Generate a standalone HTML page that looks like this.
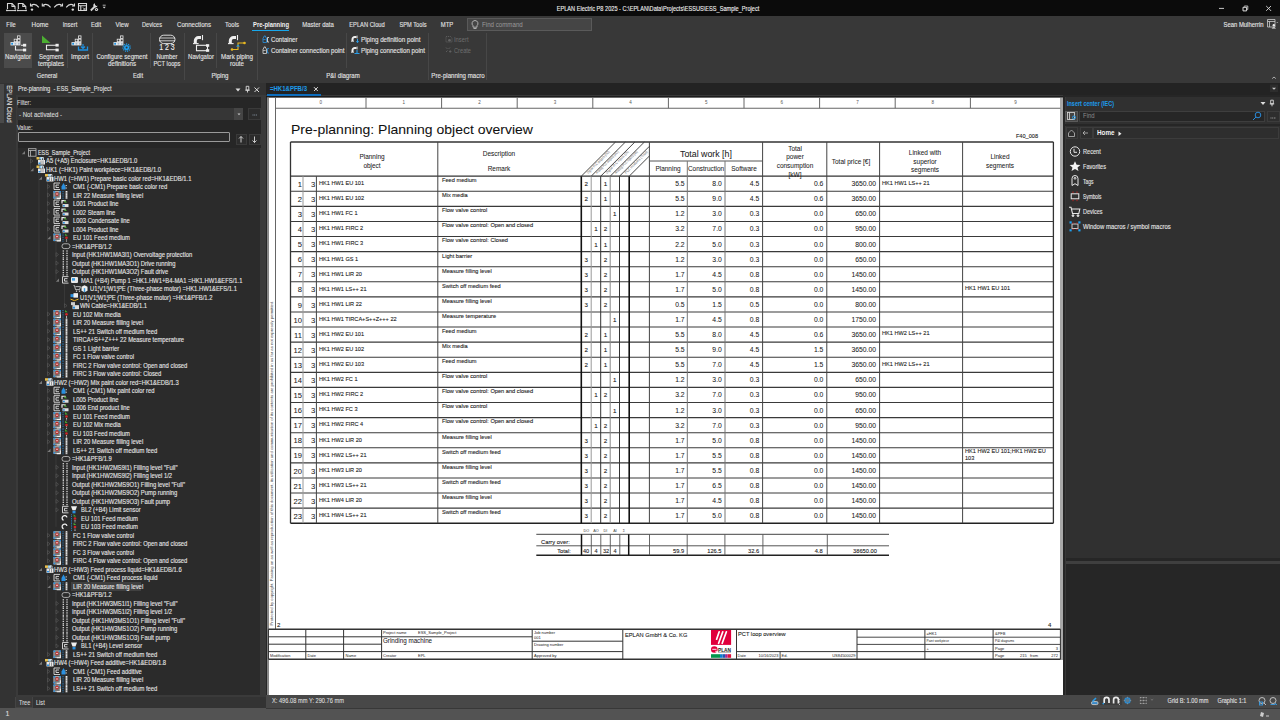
<!DOCTYPE html><html><head><meta charset="utf-8"><style>
html,body{margin:0;padding:0;width:1280px;height:720px;overflow:hidden;background:#262626;}
.t{position:absolute;white-space:pre;line-height:1;font-family:"Liberation Sans", sans-serif;}
.r{position:absolute;}
svg{position:absolute;overflow:visible;}
</style></head><body>
<div class="r" style="left:0.00px;top:0.00px;width:1280.00px;height:16.00px;background:#0b0b0b;"></div>
<div class="t" style="left:358.00px;width:600px;text-align:center;top:4.58px;font-size:7px;color:#f0f0f0;-webkit-text-stroke:0.12px #f0f0f0;transform:scaleX(0.800742416734528);transform-origin:50% 0;">EPLAN Electric P8 2025 - C:\EPLAN\Data\Projects\ESSUS\ESS_Sample_Project</div>
<svg style="left:0;top:0" width="110" height="16" viewBox="0 0 110 16" fill="none" stroke="#d8d8d8" stroke-width="1.1"><path d="M7.5 9V3.5h4.5l3 3V9"/><path d="M12.0 3.5v3h3"/><path d="M6.7 10.6h8.5" stroke-width="1"/><circle cx="6.9" cy="10.3" r="0.9" fill="#d8d8d8" stroke="none"/><circle cx="15.3" cy="10.3" r="0.9" fill="#d8d8d8" stroke="none"/><path d="M18.3 9V3.5h4.5l3 3V9"/><path d="M22.8 3.5v3h3"/><path d="M17.5 10.6h8.5" stroke-width="1"/><circle cx="17.7" cy="10.3" r="0.9" fill="#d8d8d8" stroke="none"/><circle cx="26.1" cy="10.3" r="0.9" fill="#d8d8d8" stroke="none"/><path d="M31 5.5q4-3 7.8 1.8"/><path d="M30.5 3.5v2.5h2.5"/><circle cx="32" cy="9.6" r="1.2" fill="#d8d8d8" stroke="none"/><path d="M42.8 5.5q4-3 7.8 1.8"/><path d="M42.3 3.5v2.5h2.5"/><path d="M62 5.5q-4-3-7.8 1.8"/><path d="M62.5 3.5v2.5h-2.5"/><path d="M74 5.5q-4-3-7.8 1.8"/><path d="M74.5 3.5v2.5h-2.5"/><circle cx="72.8" cy="9.6" r="1.2" fill="#d8d8d8" stroke="none"/><path d="M78.5 3.5h8v7h-8zM78.5 5.8h8M80.8 5.8v4.7"/><path d="M83 7.5l3 3M86 7.5l-3 3" stroke-width="0.9"/><path d="M90.8 10.5l4.5-4.5" stroke-width="1.8"/><path d="M95 3.2a2.2 2.2 0 1 0 2.6 2.6l-1.4 0.2-1.2-1.2z" fill="#d8d8d8" stroke="none"/><circle cx="96.5" cy="9.5" r="1.6" fill="#d8d8d8" stroke="none"/><circle cx="96.5" cy="9.5" r="0.6" fill="#0b0b0b" stroke="none"/><path d="M102.7 5.2h3" stroke-width="0.8"/><path d="M102.7 6.8h3l-1.5 1.6z" fill="#d8d8d8" stroke="none"/></svg>
<svg style="left:1210;top:0" width="70" height="16" fill="none" stroke="#ddd" stroke-width="0.9"><path d="M9 8.4h5"/><path d="M33 7.3h3.6v3.6h-3.6z" stroke-width="1"/><path d="M34.3 6.6v-0.6h3.5v3.5h-0.6" stroke-width="0.8"/><path d="M56.2 6l4.8 4.8M61 6l-4.8 4.8"/></svg>
<div class="r" style="left:0.00px;top:16.00px;width:1280.00px;height:67.00px;background:#383838;"></div>
<div class="t" style="left:-288.62px;width:600px;text-align:center;top:20.98px;font-size:7px;color:#e2e2e2;-webkit-text-stroke:0.12px #e2e2e2;transform:scaleX(0.820078627808977);transform-origin:50% 0;">File</div>
<div class="t" style="left:-259.62px;width:600px;text-align:center;top:20.98px;font-size:7px;color:#e2e2e2;-webkit-text-stroke:0.12px #e2e2e2;transform:scaleX(0.8970411032266703);transform-origin:50% 0;">Home</div>
<div class="t" style="left:-230.25px;width:600px;text-align:center;top:20.98px;font-size:7px;color:#e2e2e2;-webkit-text-stroke:0.12px #e2e2e2;transform:scaleX(0.8282453069818047);transform-origin:50% 0;">Insert</div>
<div class="t" style="left:-204.00px;width:600px;text-align:center;top:20.98px;font-size:7px;color:#e2e2e2;-webkit-text-stroke:0.12px #e2e2e2;transform:scaleX(0.8290434651944237);transform-origin:50% 0;">Edit</div>
<div class="t" style="left:-178.50px;width:600px;text-align:center;top:20.98px;font-size:7px;color:#e2e2e2;-webkit-text-stroke:0.12px #e2e2e2;transform:scaleX(0.86401342543938);transform-origin:50% 0;">View</div>
<div class="t" style="left:-148.00px;width:600px;text-align:center;top:20.98px;font-size:7px;color:#e2e2e2;-webkit-text-stroke:0.12px #e2e2e2;transform:scaleX(0.8033227436986234);transform-origin:50% 0;">Devices</div>
<div class="t" style="left:-106.00px;width:600px;text-align:center;top:20.98px;font-size:7px;color:#e2e2e2;-webkit-text-stroke:0.12px #e2e2e2;transform:scaleX(0.8737268021719499);transform-origin:50% 0;">Connections</div>
<div class="t" style="left:-68.00px;width:600px;text-align:center;top:20.98px;font-size:7px;color:#e2e2e2;-webkit-text-stroke:0.12px #e2e2e2;transform:scaleX(0.8567202339917138);transform-origin:50% 0;">Tools</div>
<div class="t" style="left:-29.50px;width:600px;text-align:center;top:20.98px;font-size:7px;color:#f0f0f0;font-weight:bold;transform:scaleX(0.841524254635597);transform-origin:50% 0;">Pre-planning</div>
<div class="t" style="left:18.25px;width:600px;text-align:center;top:20.98px;font-size:7px;color:#e2e2e2;-webkit-text-stroke:0.12px #e2e2e2;transform:scaleX(0.8522248098029525);transform-origin:50% 0;">Master data</div>
<div class="t" style="left:66.50px;width:600px;text-align:center;top:20.98px;font-size:7px;color:#e2e2e2;-webkit-text-stroke:0.12px #e2e2e2;transform:scaleX(0.8219536884086442);transform-origin:50% 0;">EPLAN Cloud</div>
<div class="t" style="left:112.50px;width:600px;text-align:center;top:20.98px;font-size:7px;color:#e2e2e2;-webkit-text-stroke:0.12px #e2e2e2;transform:scaleX(0.8101087317813438);transform-origin:50% 0;">SPM Tools</div>
<div class="t" style="left:146.75px;width:600px;text-align:center;top:20.98px;font-size:7px;color:#e2e2e2;-webkit-text-stroke:0.12px #e2e2e2;transform:scaleX(0.845965537478917);transform-origin:50% 0;">MTP</div>
<style>.tw{}</style>
<div class="r" style="left:252.00px;top:29.60px;width:37.00px;height:1.60px;background:#18a8ec;"></div>
<div class="r" style="left:466.75px;top:18.00px;width:125.00px;height:13.00px;background:#454545;box-sizing:border-box;border:1px solid #5a5a5a;"></div>
<svg style="left:470;top:19" width="10" height="11" fill="none" stroke="#bbb" stroke-width="0.9"><path d="M5 1.5a3 3 0 0 1 2 5.2v1.5h-4v-1.5a3 3 0 0 1 2-5.2zM3.5 9.5h3"/></svg>
<div class="t" style="left:482.00px;top:20.68px;font-size:7px;color:#9a9a9a;transform:scaleX(0.880192562372848);transform-origin:0 0;">Find command</div>
<div class="t" style="right:16.75px;top:20.58px;font-size:7px;color:#e6e6e6;-webkit-text-stroke:0.12px #e6e6e6;transform:scaleX(0.8426518781262055);transform-origin:100% 0;">Sean Mulherrin</div>
<svg style="left:1266;top:18" width="14" height="13" fill="none" stroke="#ccc" stroke-width="0.8"><path d="M1.5 1.5h7.5v7.5h-7.5zM1.5 3.5h7.5M3.5 3.5v5.5"/><circle cx="7.8" cy="7.3" r="1.2" fill="#eee" stroke="none"/><path d="M5.6 10.5q2.2-2.6 4.4 0z" fill="#eee" stroke="none"/><path d="M10.5 4l0.8 0.8 0.8-0.8" stroke-width="0.6"/></svg>
<svg style="left:1270;top:74" width="8" height="6" fill="none" stroke="#bbb" stroke-width="0.9"><path d="M2.2 4.6l1.8-1.6 1.8 1.6"/></svg>
<div class="r" style="left:4.00px;top:33.40px;width:28.00px;height:35.00px;background:#4b4b4b;"></div>
<div class="t" style="left:-282.00px;width:600px;text-align:center;top:52.83px;font-size:7px;color:#e4e4e4;-webkit-text-stroke:0.12px #e4e4e4;transform:scaleX(0.867861784665967);transform-origin:50% 0;">Navigator</div>
<div class="t" style="left:-249.50px;width:600px;text-align:center;top:52.83px;font-size:7px;color:#e4e4e4;-webkit-text-stroke:0.12px #e4e4e4;transform:scaleX(0.8566141655875334);transform-origin:50% 0;">Segment</div>
<div class="t" style="left:-249.50px;width:600px;text-align:center;top:60.18px;font-size:7px;color:#e4e4e4;-webkit-text-stroke:0.12px #e4e4e4;transform:scaleX(0.8567206750794165);transform-origin:50% 0;">templates</div>
<div class="t" style="left:-220.40px;width:600px;text-align:center;top:52.83px;font-size:7px;color:#e4e4e4;-webkit-text-stroke:0.12px #e4e4e4;transform:scaleX(0.9073495312027422);transform-origin:50% 0;">Import</div>
<div class="t" style="left:-178.00px;width:600px;text-align:center;top:52.83px;font-size:7px;color:#e4e4e4;-webkit-text-stroke:0.12px #e4e4e4;transform:scaleX(0.8622896484822354);transform-origin:50% 0;">Configure segment</div>
<div class="t" style="left:-178.00px;width:600px;text-align:center;top:60.18px;font-size:7px;color:#e4e4e4;-webkit-text-stroke:0.12px #e4e4e4;transform:scaleX(0.8883059381169995);transform-origin:50% 0;">definitions</div>
<div class="t" style="left:-133.00px;width:600px;text-align:center;top:52.83px;font-size:7px;color:#e4e4e4;-webkit-text-stroke:0.12px #e4e4e4;transform:scaleX(0.8434851753087287);transform-origin:50% 0;">Number</div>
<div class="t" style="left:-133.00px;width:600px;text-align:center;top:60.18px;font-size:7px;color:#e4e4e4;-webkit-text-stroke:0.12px #e4e4e4;transform:scaleX(0.8294178379553698);transform-origin:50% 0;">PCT loops</div>
<div class="t" style="left:-99.00px;width:600px;text-align:center;top:52.83px;font-size:7px;color:#e4e4e4;-webkit-text-stroke:0.12px #e4e4e4;transform:scaleX(0.867861784665967);transform-origin:50% 0;">Navigator</div>
<div class="t" style="left:-63.50px;width:600px;text-align:center;top:52.83px;font-size:7px;color:#e4e4e4;-webkit-text-stroke:0.12px #e4e4e4;transform:scaleX(0.8843958967139597);transform-origin:50% 0;">Mark piping</div>
<div class="t" style="left:-63.50px;width:600px;text-align:center;top:60.18px;font-size:7px;color:#e4e4e4;-webkit-text-stroke:0.12px #e4e4e4;transform:scaleX(0.8774575667004852);transform-origin:50% 0;">route</div>
<div class="t" style="left:-253.25px;width:600px;text-align:center;top:72.08px;font-size:7px;color:#e4e4e4;-webkit-text-stroke:0.12px #e4e4e4;transform:scaleX(0.8231779814948085);transform-origin:50% 0;">General</div>
<div class="t" style="left:-162.00px;width:600px;text-align:center;top:72.08px;font-size:7px;color:#e4e4e4;-webkit-text-stroke:0.12px #e4e4e4;transform:scaleX(0.8290434651944237);transform-origin:50% 0;">Edit</div>
<div class="t" style="left:-80.00px;width:600px;text-align:center;top:72.08px;font-size:7px;color:#e4e4e4;-webkit-text-stroke:0.12px #e4e4e4;transform:scaleX(0.8736457687600975);transform-origin:50% 0;">Piping</div>
<div class="t" style="left:43.00px;width:600px;text-align:center;top:72.08px;font-size:7px;color:#e4e4e4;-webkit-text-stroke:0.12px #e4e4e4;transform:scaleX(0.8697370059709231);transform-origin:50% 0;">P&amp;I diagram</div>
<div class="t" style="left:158.40px;width:600px;text-align:center;top:72.08px;font-size:7px;color:#e4e4e4;-webkit-text-stroke:0.12px #e4e4e4;transform:scaleX(0.8725334342831053);transform-origin:50% 0;">Pre-planning macro</div>
<div class="r" style="left:66.60px;top:33.00px;width:0.80px;height:35.00px;background:#474747;"></div>
<div class="r" style="left:92.10px;top:33.00px;width:0.80px;height:47.00px;background:#474747;"></div>
<div class="r" style="left:150.20px;top:33.00px;width:0.80px;height:35.00px;background:#474747;"></div>
<div class="r" style="left:183.60px;top:33.00px;width:0.80px;height:47.00px;background:#474747;"></div>
<div class="r" style="left:216.10px;top:33.00px;width:0.80px;height:35.00px;background:#474747;"></div>
<div class="r" style="left:256.60px;top:33.00px;width:0.80px;height:47.00px;background:#474747;"></div>
<div class="r" style="left:346.10px;top:33.00px;width:0.80px;height:35.00px;background:#474747;"></div>
<div class="r" style="left:427.60px;top:33.00px;width:0.80px;height:47.00px;background:#474747;"></div>
<div class="r" style="left:485.60px;top:33.00px;width:0.80px;height:47.00px;background:#474747;"></div>
<div class="t" style="left:270.50px;top:35.68px;font-size:7px;color:#e4e4e4;-webkit-text-stroke:0.12px #e4e4e4;transform:scaleX(0.8730953805223539);transform-origin:0 0;">Container</div>
<div class="t" style="left:270.50px;top:46.58px;font-size:7px;color:#e4e4e4;-webkit-text-stroke:0.12px #e4e4e4;transform:scaleX(0.8825731209203977);transform-origin:0 0;">Container connection point</div>
<div class="t" style="left:360.50px;top:35.68px;font-size:7px;color:#e4e4e4;-webkit-text-stroke:0.12px #e4e4e4;transform:scaleX(0.894088333955141);transform-origin:0 0;">Piping definition point</div>
<div class="t" style="left:360.50px;top:46.58px;font-size:7px;color:#e4e4e4;-webkit-text-stroke:0.12px #e4e4e4;transform:scaleX(0.8841473417730261);transform-origin:0 0;">Piping connection point</div>
<div class="t" style="left:454.00px;top:35.68px;font-size:7px;color:#6e6e6e;transform:scaleX(0.8282453069818047);transform-origin:0 0;">Insert</div>
<div class="t" style="left:454.00px;top:46.58px;font-size:7px;color:#6e6e6e;transform:scaleX(0.8091234619775186);transform-origin:0 0;">Create</div>
<svg style="left:0;top:0" width="500" height="83" viewBox="0 0 500 83"><rect x="17.1" y="35.5" width="3.3" height="3.3" fill="#f0f0f0"/><rect x="17.85" y="36.25" width="1.8" height="1.8" fill="#3a3a3a"/><rect x="13.8" y="38.8" width="3.3" height="3.3" fill="#f0f0f0"/><rect x="14.55" y="39.55" width="1.8" height="1.8" fill="#3a3a3a"/><rect x="17.1" y="38.8" width="3.3" height="3.3" fill="#f0f0f0"/><rect x="17.85" y="39.55" width="1.8" height="1.8" fill="#3a3a3a"/><rect x="10.5" y="42.1" width="9.9" height="3.3" fill="#f0f0f0"/><rect x="11.2" y="42.8" width="1.9" height="1.9" fill="#1e90e0"/><rect x="14.5" y="42.8" width="1.9" height="1.9" fill="#a8b8c8"/><rect x="17.8" y="42.8" width="1.9" height="1.9" fill="#a8b8c8"/><path d="M15.5 46v4h8M21 45.2h3" stroke="#eee" stroke-width="1.1" fill="none"/><rect x="23" y="43.8" width="3.2" height="2.8" fill="#eee"/><rect x="23" y="48.6" width="3.2" height="2.8" fill="#eee"/><path d="M42 35.5l8.5 7.5h-8.5z" fill="#4caf32"/><path d="M56 45.2h-9.5v4.6h9.5" fill="none" stroke="#eee" stroke-width="1.1"/><rect x="55.5" y="43.8" width="3.2" height="2.8" fill="#eee"/><rect x="55.5" y="48.6" width="3.2" height="2.8" fill="#eee"/><rect x="78.1" y="35.5" width="3.3" height="3.3" fill="#f0f0f0"/><rect x="78.85" y="36.25" width="1.8" height="1.8" fill="#3a3a3a"/><rect x="74.8" y="38.8" width="3.3" height="3.3" fill="#f0f0f0"/><rect x="75.55" y="39.55" width="1.8" height="1.8" fill="#3a3a3a"/><rect x="78.1" y="38.8" width="3.3" height="3.3" fill="#f0f0f0"/><rect x="78.85" y="39.55" width="1.8" height="1.8" fill="#3a3a3a"/><rect x="71.5" y="42.1" width="9.9" height="3.3" fill="#f0f0f0"/><rect x="72.2" y="42.8" width="1.9" height="1.9" fill="#1e90e0"/><rect x="75.5" y="42.8" width="1.9" height="1.9" fill="#a8b8c8"/><rect x="78.8" y="42.8" width="1.9" height="1.9" fill="#a8b8c8"/><path d="M78.5 46.5v3.5h9v-3.5" stroke="#1e90e0" stroke-width="1.3" fill="none"/><path d="M83 44v4M81 46.5l2 2 2-2" stroke="#1e90e0" stroke-width="1.2" fill="none"/><rect x="120.1" y="35.5" width="3.3" height="3.3" fill="#f0f0f0"/><rect x="120.85" y="36.25" width="1.8" height="1.8" fill="#3a3a3a"/><rect x="116.8" y="38.8" width="3.3" height="3.3" fill="#f0f0f0"/><rect x="117.55" y="39.55" width="1.8" height="1.8" fill="#3a3a3a"/><rect x="120.1" y="38.8" width="3.3" height="3.3" fill="#f0f0f0"/><rect x="120.85" y="39.55" width="1.8" height="1.8" fill="#3a3a3a"/><rect x="113.5" y="42.1" width="9.9" height="3.3" fill="#f0f0f0"/><rect x="114.2" y="42.8" width="1.9" height="1.9" fill="#1e90e0"/><rect x="117.5" y="42.8" width="1.9" height="1.9" fill="#a8b8c8"/><rect x="120.8" y="42.8" width="1.9" height="1.9" fill="#a8b8c8"/><circle cx="126.6" cy="47.6" r="2.6" fill="#1ea0f0"/><circle cx="126.6" cy="47.6" r="3.6" fill="none" stroke="#1ea0f0" stroke-width="1.3" stroke-dasharray="1.1 0.9"/><circle cx="126.6" cy="47.6" r="1" fill="#383838"/><rect x="159.5" y="35.2" width="15.5" height="8.4" rx="4.2" fill="none" stroke="#eee" stroke-width="0.9"/><path d="M159.5 38h15.5M159.5 40.8h15.5" stroke="#eee" stroke-width="0.8"/></svg>
<div class="t" style="left:-132.70px;width:600px;text-align:center;top:43.61px;font-size:8.2px;color:#f4f4f4;-webkit-text-stroke:0.12px #f4f4f4;transform:scaleX(0.849882044596875);transform-origin:50% 0;">1 2 3</div>
<svg style="left:0;top:0" width="500" height="83"><path d="M201 37.5h-2.5a3.2 3.2 0 0 0 -3.2 3.2v2.3" stroke="#eee" stroke-width="3" fill="none"/><path d="M202.5 35v5.2" stroke="#eee" stroke-width="1.1"/><path d="M193 43.6h5.6" stroke="#eee" stroke-width="1.1"/><rect x="196.5" y="45.3" width="11" height="5.4" fill="none" stroke="#eee" stroke-width="1.1"/><rect x="206" y="44.2" width="3.2" height="2.6" fill="#eee"/><rect x="206" y="49.2" width="3.2" height="2.6" fill="#eee"/><path d="M236 37.5h-2.5a3.2 3.2 0 0 0 -3.2 3.2v2.3" stroke="#eee" stroke-width="3" fill="none"/><path d="M237.5 35v5.2" stroke="#eee" stroke-width="1.1"/><path d="M228 43.6h5.6" stroke="#eee" stroke-width="1.1"/><path d="M232 49.5h6v-6.5h6" stroke="#e8b820" stroke-width="1.1" fill="none"/><circle cx="232" cy="49.5" r="1.3" fill="#e8b820"/><circle cx="244.5" cy="43" r="1.3" fill="#e8b820"/><path d="M236 46.5l2-2 2 2z" fill="#1e9be8"/><path d="M264.0 36.0h1.5v1l1 1v4.5h-3.5v-4.5l1-1z" stroke="#2a8ad0" stroke-width="0.9" fill="none"/><path d="M263.1 39.5h2.5" stroke="#2a8ad0" stroke-width="0.8"/><path d="M269.0 37.5h-1.5v4.5h1.5" stroke="#ddd" stroke-width="0.9" fill="none"/><path d="M264.0 47.0h1.5v1l1 1v4.5h-3.5v-4.5l1-1z" stroke="#c8c8c8" stroke-width="0.9" fill="none"/><path d="M263.1 50.5h2.5" stroke="#c8c8c8" stroke-width="0.8"/><path d="M269.0 48.5h-1.5v4.5h1.5" stroke="#2a8ad0" stroke-width="0.9" fill="none"/><path d="M356.5 37.0h-1.8a2.2 2.2 0 0 0 -2.2 2.2v1.8" stroke="#eee" stroke-width="2" fill="none"/><path d="M357.1 35.5v3" stroke="#eee" stroke-width="0.8"/><path d="M351.0 41.3h3" stroke="#eee" stroke-width="0.8"/><path d="M357.5 39.0v3.5M356.3 41.3l1.2 1.4 1.2-1.4" stroke="#2a9de8" stroke-width="1" fill="none"/><path d="M356.5 48.0h-1.8a2.2 2.2 0 0 0 -2.2 2.2v1.8" stroke="#eee" stroke-width="2" fill="none"/><path d="M357.1 46.5v3" stroke="#eee" stroke-width="0.8"/><path d="M351.0 52.3h3" stroke="#eee" stroke-width="0.8"/><path d="M357.0 50.0v3M354.5 53.5h5" stroke="#2a9de8" stroke-width="1.1" fill="none"/><path d="M446 36.5h4.5l1.5 1.5v4h-6z" stroke="#666" stroke-width="0.8" fill="none" stroke-dasharray="1.2 0.8"/><circle cx="449.5" cy="40.2" r="1.3" fill="#666"/><path d="M446 47.5l1.5 1.5M450 47.5l-1.5 1.5M446 52l1.5-1.5M449 51.5h2.5M450.2 50.2v2.6" stroke="#666" stroke-width="0.8"/></svg>
<div class="r" style="left:0.00px;top:83.00px;width:1280.00px;height:12.00px;background:#232323;"></div>
<svg style="left:1269;top:84" width="11" height="10"><rect x="1" y="0.5" width="8" height="7.5" fill="#2d2d2d"/><path d="M3 3.8h4l-2 2z" fill="#ccc"/></svg>
<div class="r" style="left:266.00px;top:94.60px;width:1014.00px;height:1.30px;background:#313131;"></div>
<div class="r" style="left:0.00px;top:695.00px;width:1280.00px;height:13.00px;background:#3d3d3d;"></div>
<div class="r" style="left:0.00px;top:708.00px;width:1280.00px;height:12.00px;background:#535353;"></div>
<div class="t" style="left:5.50px;top:710.08px;font-size:7px;color:#ddd;-webkit-text-stroke:0.12px #ddd;">1</div>
<svg style="left:1258;top:710" width="16" height="9"><path d="M3 2l3 1-1 4-3-1z" fill="#ccc"/><path d="M8 6h3" stroke="#ccc"/></svg>
<div class="r" style="left:0.00px;top:83.00px;width:266.00px;height:625.00px;background:#333333;"></div>
<div class="r" style="left:0.00px;top:84.00px;width:3.50px;height:38.50px;background:#4a4a4a;"></div>
<div class="t" style="left:8.8px;top:104px;font-size:6.6px;color:#e0e0e0;-webkit-text-stroke:0.12px #e0e0e0;transform:translate(-50%,-50%) rotate(90deg) scaleX(0.921);transform-origin:50% 50%;">EPLAN Cloud</div>
<div class="t" style="left:17.50px;top:85.38px;font-size:7px;color:#e0e0e0;-webkit-text-stroke:0.12px #e0e0e0;transform:scaleX(0.8118232065035939);transform-origin:0 0;">Pre-planning  - ESS_Sample_Project</div>
<svg style="left:232;top:85" width="32" height="10" fill="#ddd" stroke="#ddd"><path d="M3.5 3.5h5l-2.5 3z" stroke="none"/><path d="M14.2 1.3h2.6v3.8h-2.6z" stroke-width="0.9" fill="none"/><path d="M13.3 5.2h4.4" stroke-width="1"/><path d="M15.5 5.2v2.3" stroke-width="0.9"/><path d="M22.5 2.5l4.5 4.5M27 2.5l-4.5 4.5" stroke-width="1" fill="none"/></svg>
<div class="r" style="left:15.50px;top:95.00px;width:251.50px;height:602.00px;background:#3a3a3a;"></div>
<div class="r" style="left:17.50px;top:97.00px;width:243.00px;height:50.50px;background:#262626;"></div>
<div class="t" style="left:17.20px;top:98.68px;font-size:7px;color:#d8d8d8;-webkit-text-stroke:0.12px #d8d8d8;transform:scaleX(0.8);transform-origin:0 0;">Filter:</div>
<div class="r" style="left:17.30px;top:108.20px;width:217.00px;height:12.20px;background:#363636;"></div>
<div class="t" style="left:19.30px;top:111.08px;font-size:7px;color:#d8d8d8;-webkit-text-stroke:0.12px #d8d8d8;transform:scaleX(0.8703242210724722);transform-origin:0 0;">- Not activated -</div>
<div class="r" style="left:234.40px;top:108.20px;width:8.70px;height:12.20px;background:#454545;"></div>
<svg style="left:235;top:110" width="8" height="8"><path d="M2.5 3.5h3l-1.5 1.8z" fill="#ccc"/></svg>
<div class="r" style="left:248.00px;top:108.20px;width:13.00px;height:12.20px;background:#2c2c2c;box-sizing:border-box;border:1px solid #3a3a3a;"></div>
<svg style="left:251;top:113" width="8" height="4"><path d="M1.5 2h5" stroke="#9ab" stroke-width="0.8" stroke-dasharray="1 0.7"/></svg>
<div class="t" style="left:17.20px;top:123.58px;font-size:7px;color:#d8d8d8;-webkit-text-stroke:0.12px #d8d8d8;transform:scaleX(0.8);transform-origin:0 0;">Value:</div>
<div class="r" style="left:17.80px;top:132.20px;width:212.00px;height:9.80px;background:#2b2b2b;box-sizing:border-box;border:1.3px solid #9a9a9a;border-radius:1px;"></div>
<div class="r" style="left:235.50px;top:133.50px;width:11.50px;height:11.80px;background:#2c2c2c;box-sizing:border-box;border:1px solid #3a3a3a;"></div>
<div class="r" style="left:248.50px;top:133.50px;width:12.00px;height:11.80px;background:#2c2c2c;box-sizing:border-box;border:1px solid #3a3a3a;"></div>
<svg style="left:235;top:133" width="28" height="13" fill="none" stroke="#ddd" stroke-width="0.9"><path d="M6 3.5v6M4 5.5l2-2 2 2"/><path d="M19.5 3.5v6M17.5 7.5l2 2 2-2"/></svg>
<div class="r" style="left:18.00px;top:147.50px;width:242.00px;height:547.50px;background:#2b2b2b;"></div>
<div class="r" style="left:70.70px;top:582.00px;width:70.30px;height:9.00px;background:#404040;"></div>
<div class="t" style="left:37.50px;top:148.98px;font-size:7px;color:#e6e6e6;-webkit-text-stroke:0.12px #e6e6e6;transform:scaleX(0.773);transform-origin:0 0;">ESS_Sample_Project</div>
<div class="t" style="left:45.50px;top:157.49px;font-size:7px;color:#e6e6e6;-webkit-text-stroke:0.12px #e6e6e6;transform:scaleX(0.835);transform-origin:0 0;">A5 (+A5) Enclosure=HK1&amp;EDB/1.0</div>
<div class="t" style="left:45.50px;top:166.00px;font-size:7px;color:#e6e6e6;-webkit-text-stroke:0.12px #e6e6e6;transform:scaleX(0.835);transform-origin:0 0;">HK1 (=HK1) Paint workpiece=HK1&amp;EDB/1.0</div>
<div class="t" style="left:54.00px;top:174.50px;font-size:7px;color:#e6e6e6;-webkit-text-stroke:0.12px #e6e6e6;transform:scaleX(0.835);transform-origin:0 0;">HW1 (=HW1) Prepare basic color red=HK1&amp;EDB/1.1</div>
<div class="t" style="left:73.00px;top:183.01px;font-size:7px;color:#e6e6e6;-webkit-text-stroke:0.12px #e6e6e6;transform:scaleX(0.835);transform-origin:0 0;">CM1 (-CM1) Prepare basic color red</div>
<div class="t" style="left:73.00px;top:191.52px;font-size:7px;color:#e6e6e6;-webkit-text-stroke:0.12px #e6e6e6;transform:scaleX(0.835);transform-origin:0 0;">LIR 22 Measure filling level</div>
<div class="t" style="left:73.00px;top:200.03px;font-size:7px;color:#e6e6e6;-webkit-text-stroke:0.12px #e6e6e6;transform:scaleX(0.835);transform-origin:0 0;">L001 Product line</div>
<div class="t" style="left:73.00px;top:208.54px;font-size:7px;color:#e6e6e6;-webkit-text-stroke:0.12px #e6e6e6;transform:scaleX(0.835);transform-origin:0 0;">L002 Steam line</div>
<div class="t" style="left:73.00px;top:217.04px;font-size:7px;color:#e6e6e6;-webkit-text-stroke:0.12px #e6e6e6;transform:scaleX(0.835);transform-origin:0 0;">L003 Condensate line</div>
<div class="t" style="left:73.00px;top:225.55px;font-size:7px;color:#e6e6e6;-webkit-text-stroke:0.12px #e6e6e6;transform:scaleX(0.835);transform-origin:0 0;">L004 Product line</div>
<div class="t" style="left:73.00px;top:234.06px;font-size:7px;color:#e6e6e6;-webkit-text-stroke:0.12px #e6e6e6;transform:scaleX(0.835);transform-origin:0 0;">EU 101 Feed medium</div>
<div class="t" style="left:71.50px;top:242.57px;font-size:7px;color:#e6e6e6;-webkit-text-stroke:0.12px #e6e6e6;transform:scaleX(0.835);transform-origin:0 0;">=HK1&amp;PFB/1.2</div>
<div class="t" style="left:71.50px;top:251.08px;font-size:7px;color:#e6e6e6;-webkit-text-stroke:0.12px #e6e6e6;transform:scaleX(0.835);transform-origin:0 0;">Input (HK1HW1MA3I1) Overvoltage protection</div>
<div class="t" style="left:71.50px;top:259.58px;font-size:7px;color:#e6e6e6;-webkit-text-stroke:0.12px #e6e6e6;transform:scaleX(0.835);transform-origin:0 0;">Output (HK1HW1MA3O1) Drive running</div>
<div class="t" style="left:71.50px;top:268.09px;font-size:7px;color:#e6e6e6;-webkit-text-stroke:0.12px #e6e6e6;transform:scaleX(0.835);transform-origin:0 0;">Output (HK1HW1MA3O2) Fault drive</div>
<div class="t" style="left:81.00px;top:276.60px;font-size:7px;color:#e6e6e6;-webkit-text-stroke:0.12px #e6e6e6;transform:scaleX(0.835);transform-origin:0 0;">MA1 (+B4) Pump 1 =HK1.HW1+B4-MA1 =HK1.HW1&amp;EFS/1.1</div>
<div class="t" style="left:90.00px;top:285.11px;font-size:7px;color:#e6e6e6;-webkit-text-stroke:0.12px #e6e6e6;transform:scaleX(0.835);transform-origin:0 0;">U1¦V1¦W1¦PE (Three-phase motor) =HK1.HW1&amp;EFS/1.1</div>
<div class="t" style="left:80.00px;top:293.62px;font-size:7px;color:#e6e6e6;-webkit-text-stroke:0.12px #e6e6e6;transform:scaleX(0.835);transform-origin:0 0;">U1¦V1¦W1¦PE (Three-phase motor) =HK1&amp;PFB/1.2</div>
<div class="t" style="left:80.00px;top:302.12px;font-size:7px;color:#e6e6e6;-webkit-text-stroke:0.12px #e6e6e6;transform:scaleX(0.835);transform-origin:0 0;">WN Cable=HK1&amp;EDB/1.1</div>
<div class="t" style="left:73.00px;top:310.63px;font-size:7px;color:#e6e6e6;-webkit-text-stroke:0.12px #e6e6e6;transform:scaleX(0.835);transform-origin:0 0;">EU 102 Mix media</div>
<div class="t" style="left:73.00px;top:319.14px;font-size:7px;color:#e6e6e6;-webkit-text-stroke:0.12px #e6e6e6;transform:scaleX(0.835);transform-origin:0 0;">LIR 20 Measure filling level</div>
<div class="t" style="left:73.00px;top:327.65px;font-size:7px;color:#e6e6e6;-webkit-text-stroke:0.12px #e6e6e6;transform:scaleX(0.835);transform-origin:0 0;">LS++ 21 Switch off medium feed</div>
<div class="t" style="left:73.00px;top:336.16px;font-size:7px;color:#e6e6e6;-webkit-text-stroke:0.12px #e6e6e6;transform:scaleX(0.835);transform-origin:0 0;">TIRCA+S++Z+++ 22 Measure temperature</div>
<div class="t" style="left:73.00px;top:344.66px;font-size:7px;color:#e6e6e6;-webkit-text-stroke:0.12px #e6e6e6;transform:scaleX(0.835);transform-origin:0 0;">GS 1 Light barrier</div>
<div class="t" style="left:73.00px;top:353.17px;font-size:7px;color:#e6e6e6;-webkit-text-stroke:0.12px #e6e6e6;transform:scaleX(0.835);transform-origin:0 0;">FC 1 Flow valve control</div>
<div class="t" style="left:73.00px;top:361.68px;font-size:7px;color:#e6e6e6;-webkit-text-stroke:0.12px #e6e6e6;transform:scaleX(0.835);transform-origin:0 0;">FIRC 2 Flow valve control: Open and closed</div>
<div class="t" style="left:73.00px;top:370.19px;font-size:7px;color:#e6e6e6;-webkit-text-stroke:0.12px #e6e6e6;transform:scaleX(0.835);transform-origin:0 0;">FIRC 3 Flow valve control: Closed</div>
<div class="t" style="left:54.00px;top:378.70px;font-size:7px;color:#e6e6e6;-webkit-text-stroke:0.12px #e6e6e6;transform:scaleX(0.835);transform-origin:0 0;">HW2 (=HW2) Mix paint color red=HK1&amp;EDB/1.3</div>
<div class="t" style="left:73.00px;top:387.20px;font-size:7px;color:#e6e6e6;-webkit-text-stroke:0.12px #e6e6e6;transform:scaleX(0.835);transform-origin:0 0;">CM1 (-CM1) Mix paint color red</div>
<div class="t" style="left:73.00px;top:395.71px;font-size:7px;color:#e6e6e6;-webkit-text-stroke:0.12px #e6e6e6;transform:scaleX(0.835);transform-origin:0 0;">L005 Product line</div>
<div class="t" style="left:73.00px;top:404.22px;font-size:7px;color:#e6e6e6;-webkit-text-stroke:0.12px #e6e6e6;transform:scaleX(0.835);transform-origin:0 0;">L006 End product line</div>
<div class="t" style="left:73.00px;top:412.73px;font-size:7px;color:#e6e6e6;-webkit-text-stroke:0.12px #e6e6e6;transform:scaleX(0.835);transform-origin:0 0;">EU 101 Feed medium</div>
<div class="t" style="left:73.00px;top:421.24px;font-size:7px;color:#e6e6e6;-webkit-text-stroke:0.12px #e6e6e6;transform:scaleX(0.835);transform-origin:0 0;">EU 102 Mix media</div>
<div class="t" style="left:73.00px;top:429.74px;font-size:7px;color:#e6e6e6;-webkit-text-stroke:0.12px #e6e6e6;transform:scaleX(0.835);transform-origin:0 0;">EU 103 Feed medium</div>
<div class="t" style="left:73.00px;top:438.25px;font-size:7px;color:#e6e6e6;-webkit-text-stroke:0.12px #e6e6e6;transform:scaleX(0.835);transform-origin:0 0;">LIR 20 Measure filling level</div>
<div class="t" style="left:73.00px;top:446.76px;font-size:7px;color:#e6e6e6;-webkit-text-stroke:0.12px #e6e6e6;transform:scaleX(0.835);transform-origin:0 0;">LS++ 21 Switch off medium feed</div>
<div class="t" style="left:71.50px;top:455.27px;font-size:7px;color:#e6e6e6;-webkit-text-stroke:0.12px #e6e6e6;transform:scaleX(0.835);transform-origin:0 0;">=HK1&amp;PFB/1.9</div>
<div class="t" style="left:71.50px;top:463.78px;font-size:7px;color:#e6e6e6;-webkit-text-stroke:0.12px #e6e6e6;transform:scaleX(0.835);transform-origin:0 0;">Input (HK1HW2MS9I1) Filling level &quot;Full&quot;</div>
<div class="t" style="left:71.50px;top:472.28px;font-size:7px;color:#e6e6e6;-webkit-text-stroke:0.12px #e6e6e6;transform:scaleX(0.835);transform-origin:0 0;">Input (HK1HW2MS9I2) Filling level 1/2</div>
<div class="t" style="left:71.50px;top:480.79px;font-size:7px;color:#e6e6e6;-webkit-text-stroke:0.12px #e6e6e6;transform:scaleX(0.835);transform-origin:0 0;">Output (HK1HW2MS9O1) Filling level &quot;Full&quot;</div>
<div class="t" style="left:71.50px;top:489.30px;font-size:7px;color:#e6e6e6;-webkit-text-stroke:0.12px #e6e6e6;transform:scaleX(0.835);transform-origin:0 0;">Output (HK1HW2MS9O2) Pump running</div>
<div class="t" style="left:71.50px;top:497.81px;font-size:7px;color:#e6e6e6;-webkit-text-stroke:0.12px #e6e6e6;transform:scaleX(0.835);transform-origin:0 0;">Output (HK1HW2MS9O3) Fault pump</div>
<div class="t" style="left:81.00px;top:506.32px;font-size:7px;color:#e6e6e6;-webkit-text-stroke:0.12px #e6e6e6;transform:scaleX(0.835);transform-origin:0 0;">BL2 (+B4) Limit sensor</div>
<div class="t" style="left:80.50px;top:514.82px;font-size:7px;color:#e6e6e6;-webkit-text-stroke:0.12px #e6e6e6;transform:scaleX(0.835);transform-origin:0 0;">EU 101 Feed medium</div>
<div class="t" style="left:80.50px;top:523.33px;font-size:7px;color:#e6e6e6;-webkit-text-stroke:0.12px #e6e6e6;transform:scaleX(0.835);transform-origin:0 0;">EU 103 Feed medium</div>
<div class="t" style="left:73.00px;top:531.84px;font-size:7px;color:#e6e6e6;-webkit-text-stroke:0.12px #e6e6e6;transform:scaleX(0.835);transform-origin:0 0;">FC 1 Flow valve control</div>
<div class="t" style="left:73.00px;top:540.35px;font-size:7px;color:#e6e6e6;-webkit-text-stroke:0.12px #e6e6e6;transform:scaleX(0.835);transform-origin:0 0;">FIRC 2 Flow valve control: Open and closed</div>
<div class="t" style="left:73.00px;top:548.86px;font-size:7px;color:#e6e6e6;-webkit-text-stroke:0.12px #e6e6e6;transform:scaleX(0.835);transform-origin:0 0;">FC 3 Flow valve control</div>
<div class="t" style="left:73.00px;top:557.36px;font-size:7px;color:#e6e6e6;-webkit-text-stroke:0.12px #e6e6e6;transform:scaleX(0.835);transform-origin:0 0;">FIRC 4 Flow valve control: Open and closed</div>
<div class="t" style="left:54.00px;top:565.87px;font-size:7px;color:#e6e6e6;-webkit-text-stroke:0.12px #e6e6e6;transform:scaleX(0.835);transform-origin:0 0;">HW3 (=HW3) Feed process liquid=HK1&amp;EDB/1.6</div>
<div class="t" style="left:73.00px;top:574.38px;font-size:7px;color:#e6e6e6;-webkit-text-stroke:0.12px #e6e6e6;transform:scaleX(0.835);transform-origin:0 0;">CM1 (-CM1) Feed process liquid</div>
<div class="t" style="left:73.00px;top:582.89px;font-size:7px;color:#e6e6e6;-webkit-text-stroke:0.12px #e6e6e6;transform:scaleX(0.835);transform-origin:0 0;">LIR 20 Measure filling level</div>
<div class="t" style="left:71.50px;top:591.40px;font-size:7px;color:#e6e6e6;-webkit-text-stroke:0.12px #e6e6e6;transform:scaleX(0.835);transform-origin:0 0;">=HK1&amp;PFB/1.2</div>
<div class="t" style="left:71.50px;top:599.90px;font-size:7px;color:#e6e6e6;-webkit-text-stroke:0.12px #e6e6e6;transform:scaleX(0.835);transform-origin:0 0;">Input (HK1HW3MS1I1) Filling level &quot;Full&quot;</div>
<div class="t" style="left:71.50px;top:608.41px;font-size:7px;color:#e6e6e6;-webkit-text-stroke:0.12px #e6e6e6;transform:scaleX(0.835);transform-origin:0 0;">Input (HK1HW3MS1I2) Filling level 1/2</div>
<div class="t" style="left:71.50px;top:616.92px;font-size:7px;color:#e6e6e6;-webkit-text-stroke:0.12px #e6e6e6;transform:scaleX(0.835);transform-origin:0 0;">Output (HK1HW3MS1O1) Filling level &quot;Full&quot;</div>
<div class="t" style="left:71.50px;top:625.43px;font-size:7px;color:#e6e6e6;-webkit-text-stroke:0.12px #e6e6e6;transform:scaleX(0.835);transform-origin:0 0;">Output (HK1HW3MS1O2) Pump running</div>
<div class="t" style="left:71.50px;top:633.94px;font-size:7px;color:#e6e6e6;-webkit-text-stroke:0.12px #e6e6e6;transform:scaleX(0.835);transform-origin:0 0;">Output (HK1HW3MS1O3) Fault pump</div>
<div class="t" style="left:81.00px;top:642.44px;font-size:7px;color:#e6e6e6;-webkit-text-stroke:0.12px #e6e6e6;transform:scaleX(0.835);transform-origin:0 0;">BL1 (+B4) Level sensor</div>
<div class="t" style="left:73.00px;top:650.95px;font-size:7px;color:#e6e6e6;-webkit-text-stroke:0.12px #e6e6e6;transform:scaleX(0.835);transform-origin:0 0;">LS++ 21 Switch off medium feed</div>
<div class="t" style="left:54.00px;top:659.46px;font-size:7px;color:#e6e6e6;-webkit-text-stroke:0.12px #e6e6e6;transform:scaleX(0.835);transform-origin:0 0;">HW4 (=HW4) Feed additive=HK1&amp;EDB/1.8</div>
<div class="t" style="left:73.00px;top:667.97px;font-size:7px;color:#e6e6e6;-webkit-text-stroke:0.12px #e6e6e6;transform:scaleX(0.835);transform-origin:0 0;">CM1 (-CM1) Feed additive</div>
<div class="t" style="left:73.00px;top:676.48px;font-size:7px;color:#e6e6e6;-webkit-text-stroke:0.12px #e6e6e6;transform:scaleX(0.835);transform-origin:0 0;">LIR 20 Measure filling level</div>
<div class="t" style="left:73.00px;top:684.98px;font-size:7px;color:#e6e6e6;-webkit-text-stroke:0.12px #e6e6e6;transform:scaleX(0.835);transform-origin:0 0;">LS++ 21 Switch off medium feed</div>
<svg style="left:0;top:0" width="266" height="720">
<path d="M30.5 156.5V169.5" stroke="#3c3c3c" stroke-width="0.8"/>
<path d="M39.0 173.5V663.0" stroke="#3c3c3c" stroke-width="0.8"/>
<path d="M47.5 182.0V373.7" stroke="#3c3c3c" stroke-width="0.8"/>
<path d="M56.0 241.6V280.1" stroke="#3c3c3c" stroke-width="0.8"/>
<path d="M64.5 284.1V305.6" stroke="#3c3c3c" stroke-width="0.8"/>
<path d="M47.5 386.2V560.9" stroke="#3c3c3c" stroke-width="0.8"/>
<path d="M56.0 454.3V526.9" stroke="#3c3c3c" stroke-width="0.8"/>
<path d="M47.5 573.4V654.5" stroke="#3c3c3c" stroke-width="0.8"/>
<path d="M56.0 590.4V646.0" stroke="#3c3c3c" stroke-width="0.8"/>
<path d="M47.5 667.0V688.5" stroke="#3c3c3c" stroke-width="0.8"/>
<path d="M25.0 151.0v3.2h-3.2z" fill="#7a7a7a"/>
<rect x="28.5" y="148.7" width="7.5" height="7.5" fill="none" stroke="#bbb" stroke-width="0.8"/><path d="M28.5 150.5h7.5M30.5 150.5v5.7" stroke="#bbb" stroke-width="0.8"/>
<path d="M30.5 159.008l2.5 2-2.5 2z" fill="none" stroke="#5a5a5a" stroke-width="0.6"/>
<rect x="36.5" y="157.008" width="3" height="2.5" fill="#e8c050"/><rect x="39.5" y="157.008" width="3" height="2.5" fill="#8ac8f0"/><rect x="38.0" y="160.008" width="7" height="4.5" fill="#e8e8e8"/><rect x="38.5" y="162.508" width="2" height="1.5" fill="#2a90e0"/><path d="M41.5 160.008v-2.5h2v2.5" stroke="#e8e8e8" stroke-width="0.8" fill="none"/><path d="M41.0 160.508v3.5M43.0 160.508v3.5" stroke="#444" stroke-width="0.5"/>
<path d="M33.5 168.016v3.2h-3.2z" fill="#7a7a7a"/>
<rect x="36.5" y="165.516" width="3" height="2.5" fill="#e8c050"/><rect x="39.5" y="165.516" width="3" height="2.5" fill="#8ac8f0"/><rect x="38.0" y="168.516" width="7" height="4.5" fill="#e8e8e8"/><rect x="38.5" y="171.016" width="2" height="1.5" fill="#2a90e0"/><path d="M41.5 168.516v-2.5h2v2.5" stroke="#e8e8e8" stroke-width="0.8" fill="none"/><path d="M41.0 169.016v3.5M43.0 169.016v3.5" stroke="#444" stroke-width="0.5"/>
<path d="M42.0 176.524v3.2h-3.2z" fill="#7a7a7a"/>
<rect x="45.0" y="174.024" width="3" height="2.5" fill="#e8c050"/><rect x="48.0" y="174.024" width="3" height="2.5" fill="#8ac8f0"/><rect x="46.5" y="177.024" width="7" height="4.5" fill="#e8e8e8"/><rect x="47.0" y="179.524" width="2" height="1.5" fill="#2a90e0"/><path d="M50.0 177.024v-2.5h2v2.5" stroke="#e8e8e8" stroke-width="0.8" fill="none"/><path d="M49.5 177.524v3.5M51.5 177.524v3.5" stroke="#444" stroke-width="0.5"/>
<path d="M47.5 184.53199999999998l2.5 2-2.5 2z" fill="none" stroke="#5a5a5a" stroke-width="0.6"/>
<path d="M60.0 183.03199999999998h-6v6.5h6M59.0 185.03199999999998h-3v2.5h3" fill="none" stroke="#e0e0e0" stroke-width="0.9"/>
<path d="M63.5 183.03199999999998l-2 3.5v3h4v-3z" fill="#2a90e0"/><path d="M65.5 185.53199999999998h1.5M65.5 188.03199999999998h1.5" stroke="#ddd" stroke-width="0.8"/>
<path d="M47.5 193.04l2.5 2-2.5 2z" fill="none" stroke="#5a5a5a" stroke-width="0.6"/>
<rect x="53.9" y="191.44" width="6.6" height="6.8" fill="#777" stroke="#ccc" stroke-width="0.7"/><ellipse cx="57.0" cy="194.04" rx="1.5" ry="1.9" fill="#c82020"/><circle cx="57.0" cy="194.04" r="0.8" fill="#eee"/><rect x="53.5" y="191.04" width="1.6" height="1.6" fill="#2a90e0"/><rect x="59.3" y="191.04" width="1.6" height="1.6" fill="#2a90e0"/><rect x="53.5" y="196.84" width="1.6" height="1.6" fill="#2a90e0"/><path d="M60.3 195.34v3h-3.6" stroke="#f0f0f0" stroke-width="1.1" fill="none"/>
<path d="M63.0 191.04v8" stroke="#2a90e0" stroke-width="0.9" stroke-dasharray="0.9 0.9"/>
<rect x="65.5" y="191.04" width="2" height="8" fill="#999"/><path d="M66.5 191.04v8" stroke="#f0f0f0" stroke-width="1.3" stroke-dasharray="0.9 0.7"/>
<path d="M47.5 201.548l2.5 2-2.5 2z" fill="none" stroke="#5a5a5a" stroke-width="0.6"/>
<path d="M60.0 200.048h-6v6.5h6M59.0 202.048h-3v2.5h3" fill="none" stroke="#e0e0e0" stroke-width="0.9"/>
<path d="M62.0 203.548v-3h3v1" fill="none" stroke="#eee" stroke-width="1.2"/><path d="M64.5 200.048l2.5 2.5h-2.5z" fill="#4caf32"/><rect x="62.5" y="204.048" width="6" height="3" fill="#ddd"/><rect x="63.0" y="205.048" width="1.8" height="1.5" fill="#2a90e0"/>
<path d="M47.5 210.05599999999998l2.5 2-2.5 2z" fill="none" stroke="#5a5a5a" stroke-width="0.6"/>
<path d="M60.0 208.55599999999998h-6v6.5h6M59.0 210.55599999999998h-3v2.5h3" fill="none" stroke="#e0e0e0" stroke-width="0.9"/>
<path d="M62.0 212.05599999999998v-3h3v1" fill="none" stroke="#eee" stroke-width="1.2"/><path d="M64.5 208.55599999999998l2.5 2.5h-2.5z" fill="#4caf32"/><rect x="62.5" y="212.55599999999998" width="6" height="3" fill="#ddd"/><rect x="63.0" y="213.55599999999998" width="1.8" height="1.5" fill="#2a90e0"/>
<path d="M47.5 218.564l2.5 2-2.5 2z" fill="none" stroke="#5a5a5a" stroke-width="0.6"/>
<path d="M60.0 217.064h-6v6.5h6M59.0 219.064h-3v2.5h3" fill="none" stroke="#e0e0e0" stroke-width="0.9"/>
<path d="M62.0 220.564v-3h3v1" fill="none" stroke="#eee" stroke-width="1.2"/><path d="M64.5 217.064l2.5 2.5h-2.5z" fill="#4caf32"/><rect x="62.5" y="221.064" width="6" height="3" fill="#ddd"/><rect x="63.0" y="222.064" width="1.8" height="1.5" fill="#2a90e0"/>
<path d="M47.5 227.072l2.5 2-2.5 2z" fill="none" stroke="#5a5a5a" stroke-width="0.6"/>
<path d="M60.0 225.572h-6v6.5h6M59.0 227.572h-3v2.5h3" fill="none" stroke="#e0e0e0" stroke-width="0.9"/>
<path d="M62.0 229.072v-3h3v1" fill="none" stroke="#eee" stroke-width="1.2"/><path d="M64.5 225.572l2.5 2.5h-2.5z" fill="#4caf32"/><rect x="62.5" y="229.572" width="6" height="3" fill="#ddd"/><rect x="63.0" y="230.572" width="1.8" height="1.5" fill="#2a90e0"/>
<path d="M50.5 236.07999999999998v3.2h-3.2z" fill="#7a7a7a"/>
<rect x="53.9" y="233.98" width="6.6" height="6.8" fill="#777" stroke="#ccc" stroke-width="0.7"/><ellipse cx="57.0" cy="236.57999999999998" rx="1.5" ry="1.9" fill="#c82020"/><circle cx="57.0" cy="236.57999999999998" r="0.8" fill="#eee"/><rect x="53.5" y="233.57999999999998" width="1.6" height="1.6" fill="#2a90e0"/><rect x="59.3" y="233.57999999999998" width="1.6" height="1.6" fill="#2a90e0"/><rect x="53.5" y="239.38" width="1.6" height="1.6" fill="#2a90e0"/><path d="M60.3 237.88v3h-3.6" stroke="#f0f0f0" stroke-width="1.1" fill="none"/>
<path d="M63.0 233.57999999999998v8" stroke="#2a90e0" stroke-width="0.9" stroke-dasharray="0.9 0.9"/>
<path d="M65.1 233.38l2.6 2.4h-2.6z" fill="#4caf32"/><circle cx="66.5" cy="237.77999999999997" r="1.3" fill="#d02828"/><path d="M66.5 239.38v2.4" stroke="#ddd" stroke-width="1.1" stroke-dasharray="0.8 0.6"/>
<rect x="62.0" y="243.78799999999998" width="8" height="4.8" rx="2.2" fill="none" stroke="#ccc" stroke-width="0.8"/>
<path d="M56.0 252.596l2.5 2-2.5 2z" fill="none" stroke="#5a5a5a" stroke-width="0.6"/>
<rect x="62.65" y="250.35" width="1.3" height="1.3" fill="#d8d8d8"/>
<rect x="62.65" y="252.65" width="1.3" height="1.3" fill="#d8d8d8"/>
<rect x="62.65" y="254.95" width="1.3" height="1.3" fill="#d8d8d8"/>
<rect x="62.65" y="257.25" width="1.3" height="1.3" fill="#d8d8d8"/>
<rect x="66.35" y="250.35" width="1.3" height="1.3" fill="#d8d8d8"/>
<rect x="66.35" y="252.65" width="1.3" height="1.3" fill="#d8d8d8"/>
<rect x="66.35" y="254.95" width="1.3" height="1.3" fill="#d8d8d8"/>
<rect x="66.35" y="257.25" width="1.3" height="1.3" fill="#d8d8d8"/>
<path d="M56.0 261.104l2.5 2-2.5 2z" fill="none" stroke="#5a5a5a" stroke-width="0.6"/>
<rect x="62.65" y="258.85" width="1.3" height="1.3" fill="#d8d8d8"/>
<rect x="62.65" y="261.15" width="1.3" height="1.3" fill="#d8d8d8"/>
<rect x="62.65" y="263.45" width="1.3" height="1.3" fill="#d8d8d8"/>
<rect x="62.65" y="265.75" width="1.3" height="1.3" fill="#d8d8d8"/>
<rect x="66.35" y="258.85" width="1.3" height="1.3" fill="#d8d8d8"/>
<rect x="66.35" y="261.15" width="1.3" height="1.3" fill="#d8d8d8"/>
<rect x="66.35" y="263.45" width="1.3" height="1.3" fill="#d8d8d8"/>
<rect x="66.35" y="265.75" width="1.3" height="1.3" fill="#d8d8d8"/>
<path d="M56.0 269.61199999999997l2.5 2-2.5 2z" fill="none" stroke="#5a5a5a" stroke-width="0.6"/>
<rect x="62.65" y="267.36" width="1.3" height="1.3" fill="#d8d8d8"/>
<rect x="62.65" y="269.66" width="1.3" height="1.3" fill="#d8d8d8"/>
<rect x="62.65" y="271.96" width="1.3" height="1.3" fill="#d8d8d8"/>
<rect x="62.65" y="274.26" width="1.3" height="1.3" fill="#d8d8d8"/>
<rect x="66.35" y="267.36" width="1.3" height="1.3" fill="#d8d8d8"/>
<rect x="66.35" y="269.66" width="1.3" height="1.3" fill="#d8d8d8"/>
<rect x="66.35" y="271.96" width="1.3" height="1.3" fill="#d8d8d8"/>
<rect x="66.35" y="274.26" width="1.3" height="1.3" fill="#d8d8d8"/>
<path d="M59.0 278.62v3.2h-3.2z" fill="#7a7a7a"/>
<path d="M68.5 276.62h-6v6.5h6M67.5 278.62h-3v2.5h3" fill="none" stroke="#e0e0e0" stroke-width="0.9"/>
<rect x="71.0" y="277.12" width="7" height="6" rx="1" fill="#e8e8e8"/><rect x="72.0" y="278.12" width="3" height="2.5" fill="#3a9ae0"/>
<path d="M73.5 285.628h1l1 4h4l1-3h-5" fill="none" stroke="#ddd" stroke-width="0.8"/><circle cx="76.5" cy="291.128" r="0.7" fill="#ddd"/><circle cx="79.5" cy="291.128" r="0.7" fill="#ddd"/>
<path d="M81.5 286.628l3-1.5 3 1.5v4l-3 1.5-3-1.5z" fill="#eee"/><path d="M84.5 288.128v4" stroke="#3a9ae0" stroke-width="1.4"/>
<rect x="70.5" y="294.13599999999997" width="3.5" height="3" fill="#2a90e0"/><rect x="73.5" y="293.13599999999997" width="4.5" height="4.5" fill="#eee"/><path d="M70.5 299.13599999999997l4 1.5 4-1.5" stroke="#e8b020" stroke-width="1" fill="none"/>
<path d="M64.5 303.644l2.5 2-2.5 2z" fill="none" stroke="#5a5a5a" stroke-width="0.6"/>
<rect x="71.0" y="302.144" width="4" height="3" fill="#ccc"/><rect x="72.5" y="305.144" width="6.5" height="4" fill="#ddd"/><rect x="73.0" y="306.644" width="2" height="2" fill="#2a90e0"/>
<path d="M47.5 312.152l2.5 2-2.5 2z" fill="none" stroke="#5a5a5a" stroke-width="0.6"/>
<rect x="53.9" y="310.55199999999996" width="6.6" height="6.8" fill="#777" stroke="#ccc" stroke-width="0.7"/><ellipse cx="57.0" cy="313.152" rx="1.5" ry="1.9" fill="#c82020"/><circle cx="57.0" cy="313.152" r="0.8" fill="#eee"/><rect x="53.5" y="310.152" width="1.6" height="1.6" fill="#2a90e0"/><rect x="59.3" y="310.152" width="1.6" height="1.6" fill="#2a90e0"/><rect x="53.5" y="315.952" width="1.6" height="1.6" fill="#2a90e0"/><path d="M60.3 314.452v3h-3.6" stroke="#f0f0f0" stroke-width="1.1" fill="none"/>
<path d="M63.0 310.152v8" stroke="#2a90e0" stroke-width="0.9" stroke-dasharray="0.9 0.9"/>
<path d="M65.1 309.952l2.6 2.4h-2.6z" fill="#4caf32"/><circle cx="66.5" cy="314.352" r="1.3" fill="#d02828"/><path d="M66.5 315.952v2.4" stroke="#ddd" stroke-width="1.1" stroke-dasharray="0.8 0.6"/>
<path d="M47.5 320.65999999999997l2.5 2-2.5 2z" fill="none" stroke="#5a5a5a" stroke-width="0.6"/>
<rect x="53.9" y="319.05999999999995" width="6.6" height="6.8" fill="#777" stroke="#ccc" stroke-width="0.7"/><ellipse cx="57.0" cy="321.65999999999997" rx="1.5" ry="1.9" fill="#c82020"/><circle cx="57.0" cy="321.65999999999997" r="0.8" fill="#eee"/><rect x="53.5" y="318.65999999999997" width="1.6" height="1.6" fill="#2a90e0"/><rect x="59.3" y="318.65999999999997" width="1.6" height="1.6" fill="#2a90e0"/><rect x="53.5" y="324.46" width="1.6" height="1.6" fill="#2a90e0"/><path d="M60.3 322.96v3h-3.6" stroke="#f0f0f0" stroke-width="1.1" fill="none"/>
<path d="M63.0 318.65999999999997v8" stroke="#2a90e0" stroke-width="0.9" stroke-dasharray="0.9 0.9"/>
<rect x="65.5" y="318.65999999999997" width="2" height="8" fill="#999"/><path d="M66.5 318.65999999999997v8" stroke="#f0f0f0" stroke-width="1.3" stroke-dasharray="0.9 0.7"/>
<path d="M47.5 329.168l2.5 2-2.5 2z" fill="none" stroke="#5a5a5a" stroke-width="0.6"/>
<rect x="53.9" y="327.568" width="6.6" height="6.8" fill="#777" stroke="#ccc" stroke-width="0.7"/><ellipse cx="57.0" cy="330.168" rx="1.5" ry="1.9" fill="#c82020"/><circle cx="57.0" cy="330.168" r="0.8" fill="#eee"/><rect x="53.5" y="327.168" width="1.6" height="1.6" fill="#2a90e0"/><rect x="59.3" y="327.168" width="1.6" height="1.6" fill="#2a90e0"/><rect x="53.5" y="332.968" width="1.6" height="1.6" fill="#2a90e0"/><path d="M60.3 331.468v3h-3.6" stroke="#f0f0f0" stroke-width="1.1" fill="none"/>
<path d="M63.0 327.168v8" stroke="#2a90e0" stroke-width="0.9" stroke-dasharray="0.9 0.9"/>
<rect x="65.5" y="327.168" width="2" height="8" fill="#999"/><path d="M66.5 327.168v8" stroke="#f0f0f0" stroke-width="1.3" stroke-dasharray="0.9 0.7"/>
<path d="M47.5 337.676l2.5 2-2.5 2z" fill="none" stroke="#5a5a5a" stroke-width="0.6"/>
<rect x="53.9" y="336.07599999999996" width="6.6" height="6.8" fill="#777" stroke="#ccc" stroke-width="0.7"/><ellipse cx="57.0" cy="338.676" rx="1.5" ry="1.9" fill="#c82020"/><circle cx="57.0" cy="338.676" r="0.8" fill="#eee"/><rect x="53.5" y="335.676" width="1.6" height="1.6" fill="#2a90e0"/><rect x="59.3" y="335.676" width="1.6" height="1.6" fill="#2a90e0"/><rect x="53.5" y="341.476" width="1.6" height="1.6" fill="#2a90e0"/><path d="M60.3 339.976v3h-3.6" stroke="#f0f0f0" stroke-width="1.1" fill="none"/>
<path d="M63.0 335.676v8" stroke="#2a90e0" stroke-width="0.9" stroke-dasharray="0.9 0.9"/>
<rect x="65.5" y="335.676" width="2" height="8" fill="#999"/><path d="M66.5 335.676v8" stroke="#f0f0f0" stroke-width="1.3" stroke-dasharray="0.9 0.7"/>
<path d="M47.5 346.18399999999997l2.5 2-2.5 2z" fill="none" stroke="#5a5a5a" stroke-width="0.6"/>
<rect x="53.9" y="344.58399999999995" width="6.6" height="6.8" fill="#777" stroke="#ccc" stroke-width="0.7"/><ellipse cx="57.0" cy="347.18399999999997" rx="1.5" ry="1.9" fill="#c82020"/><circle cx="57.0" cy="347.18399999999997" r="0.8" fill="#eee"/><rect x="53.5" y="344.18399999999997" width="1.6" height="1.6" fill="#2a90e0"/><rect x="59.3" y="344.18399999999997" width="1.6" height="1.6" fill="#2a90e0"/><rect x="53.5" y="349.984" width="1.6" height="1.6" fill="#2a90e0"/><path d="M60.3 348.484v3h-3.6" stroke="#f0f0f0" stroke-width="1.1" fill="none"/>
<path d="M63.0 344.18399999999997v8" stroke="#2a90e0" stroke-width="0.9" stroke-dasharray="0.9 0.9"/>
<rect x="65.5" y="344.18399999999997" width="2" height="8" fill="#999"/><path d="M66.5 344.18399999999997v8" stroke="#f0f0f0" stroke-width="1.3" stroke-dasharray="0.9 0.7"/>
<path d="M47.5 354.692l2.5 2-2.5 2z" fill="none" stroke="#5a5a5a" stroke-width="0.6"/>
<rect x="53.9" y="353.092" width="6.6" height="6.8" fill="#777" stroke="#ccc" stroke-width="0.7"/><ellipse cx="57.0" cy="355.692" rx="1.5" ry="1.9" fill="#c82020"/><circle cx="57.0" cy="355.692" r="0.8" fill="#eee"/><rect x="53.5" y="352.692" width="1.6" height="1.6" fill="#2a90e0"/><rect x="59.3" y="352.692" width="1.6" height="1.6" fill="#2a90e0"/><rect x="53.5" y="358.492" width="1.6" height="1.6" fill="#2a90e0"/><path d="M60.3 356.992v3h-3.6" stroke="#f0f0f0" stroke-width="1.1" fill="none"/>
<path d="M63.0 352.692v8" stroke="#2a90e0" stroke-width="0.9" stroke-dasharray="0.9 0.9"/>
<rect x="65.5" y="352.692" width="2" height="8" fill="#999"/><path d="M66.5 352.692v8" stroke="#f0f0f0" stroke-width="1.3" stroke-dasharray="0.9 0.7"/>
<path d="M47.5 363.2l2.5 2-2.5 2z" fill="none" stroke="#5a5a5a" stroke-width="0.6"/>
<rect x="53.9" y="361.59999999999997" width="6.6" height="6.8" fill="#777" stroke="#ccc" stroke-width="0.7"/><ellipse cx="57.0" cy="364.2" rx="1.5" ry="1.9" fill="#c82020"/><circle cx="57.0" cy="364.2" r="0.8" fill="#eee"/><rect x="53.5" y="361.2" width="1.6" height="1.6" fill="#2a90e0"/><rect x="59.3" y="361.2" width="1.6" height="1.6" fill="#2a90e0"/><rect x="53.5" y="367.0" width="1.6" height="1.6" fill="#2a90e0"/><path d="M60.3 365.5v3h-3.6" stroke="#f0f0f0" stroke-width="1.1" fill="none"/>
<path d="M63.0 361.2v8" stroke="#2a90e0" stroke-width="0.9" stroke-dasharray="0.9 0.9"/>
<rect x="65.5" y="361.2" width="2" height="8" fill="#999"/><path d="M66.5 361.2v8" stroke="#f0f0f0" stroke-width="1.3" stroke-dasharray="0.9 0.7"/>
<path d="M47.5 371.70799999999997l2.5 2-2.5 2z" fill="none" stroke="#5a5a5a" stroke-width="0.6"/>
<rect x="53.9" y="370.10799999999995" width="6.6" height="6.8" fill="#777" stroke="#ccc" stroke-width="0.7"/><ellipse cx="57.0" cy="372.70799999999997" rx="1.5" ry="1.9" fill="#c82020"/><circle cx="57.0" cy="372.70799999999997" r="0.8" fill="#eee"/><rect x="53.5" y="369.70799999999997" width="1.6" height="1.6" fill="#2a90e0"/><rect x="59.3" y="369.70799999999997" width="1.6" height="1.6" fill="#2a90e0"/><rect x="53.5" y="375.508" width="1.6" height="1.6" fill="#2a90e0"/><path d="M60.3 374.008v3h-3.6" stroke="#f0f0f0" stroke-width="1.1" fill="none"/>
<path d="M63.0 369.70799999999997v8" stroke="#2a90e0" stroke-width="0.9" stroke-dasharray="0.9 0.9"/>
<rect x="65.5" y="369.70799999999997" width="2" height="8" fill="#999"/><path d="M66.5 369.70799999999997v8" stroke="#f0f0f0" stroke-width="1.3" stroke-dasharray="0.9 0.7"/>
<path d="M42.0 380.716v3.2h-3.2z" fill="#7a7a7a"/>
<rect x="45.0" y="378.216" width="3" height="2.5" fill="#e8c050"/><rect x="48.0" y="378.216" width="3" height="2.5" fill="#8ac8f0"/><rect x="46.5" y="381.216" width="7" height="4.5" fill="#e8e8e8"/><rect x="47.0" y="383.716" width="2" height="1.5" fill="#2a90e0"/><path d="M50.0 381.216v-2.5h2v2.5" stroke="#e8e8e8" stroke-width="0.8" fill="none"/><path d="M49.5 381.716v3.5M51.5 381.716v3.5" stroke="#444" stroke-width="0.5"/>
<path d="M47.5 388.724l2.5 2-2.5 2z" fill="none" stroke="#5a5a5a" stroke-width="0.6"/>
<path d="M60.0 387.224h-6v6.5h6M59.0 389.224h-3v2.5h3" fill="none" stroke="#e0e0e0" stroke-width="0.9"/>
<path d="M63.5 387.224l-2 3.5v3h4v-3z" fill="#2a90e0"/><path d="M65.5 389.724h1.5M65.5 392.224h1.5" stroke="#ddd" stroke-width="0.8"/>
<path d="M47.5 397.23199999999997l2.5 2-2.5 2z" fill="none" stroke="#5a5a5a" stroke-width="0.6"/>
<path d="M60.0 395.73199999999997h-6v6.5h6M59.0 397.73199999999997h-3v2.5h3" fill="none" stroke="#e0e0e0" stroke-width="0.9"/>
<path d="M62.0 399.23199999999997v-3h3v1" fill="none" stroke="#eee" stroke-width="1.2"/><path d="M64.5 395.73199999999997l2.5 2.5h-2.5z" fill="#4caf32"/><rect x="62.5" y="399.73199999999997" width="6" height="3" fill="#ddd"/><rect x="63.0" y="400.73199999999997" width="1.8" height="1.5" fill="#2a90e0"/>
<path d="M47.5 405.74l2.5 2-2.5 2z" fill="none" stroke="#5a5a5a" stroke-width="0.6"/>
<path d="M60.0 404.24h-6v6.5h6M59.0 406.24h-3v2.5h3" fill="none" stroke="#e0e0e0" stroke-width="0.9"/>
<path d="M62.0 407.74v-3h3v1" fill="none" stroke="#eee" stroke-width="1.2"/><path d="M64.5 404.24l2.5 2.5h-2.5z" fill="#4caf32"/><rect x="62.5" y="408.24" width="6" height="3" fill="#ddd"/><rect x="63.0" y="409.24" width="1.8" height="1.5" fill="#2a90e0"/>
<path d="M47.5 414.248l2.5 2-2.5 2z" fill="none" stroke="#5a5a5a" stroke-width="0.6"/>
<rect x="53.9" y="412.64799999999997" width="6.6" height="6.8" fill="#777" stroke="#ccc" stroke-width="0.7"/><ellipse cx="57.0" cy="415.248" rx="1.5" ry="1.9" fill="#c82020"/><circle cx="57.0" cy="415.248" r="0.8" fill="#eee"/><rect x="53.5" y="412.248" width="1.6" height="1.6" fill="#2a90e0"/><rect x="59.3" y="412.248" width="1.6" height="1.6" fill="#2a90e0"/><rect x="53.5" y="418.048" width="1.6" height="1.6" fill="#2a90e0"/><path d="M60.3 416.548v3h-3.6" stroke="#f0f0f0" stroke-width="1.1" fill="none"/>
<path d="M63.0 412.248v8" stroke="#2a90e0" stroke-width="0.9" stroke-dasharray="0.9 0.9"/>
<path d="M65.1 412.048l2.6 2.4h-2.6z" fill="#4caf32"/><circle cx="66.5" cy="416.448" r="1.3" fill="#d02828"/><path d="M66.5 418.048v2.4" stroke="#ddd" stroke-width="1.1" stroke-dasharray="0.8 0.6"/>
<path d="M47.5 422.756l2.5 2-2.5 2z" fill="none" stroke="#5a5a5a" stroke-width="0.6"/>
<rect x="53.9" y="421.15599999999995" width="6.6" height="6.8" fill="#777" stroke="#ccc" stroke-width="0.7"/><ellipse cx="57.0" cy="423.756" rx="1.5" ry="1.9" fill="#c82020"/><circle cx="57.0" cy="423.756" r="0.8" fill="#eee"/><rect x="53.5" y="420.756" width="1.6" height="1.6" fill="#2a90e0"/><rect x="59.3" y="420.756" width="1.6" height="1.6" fill="#2a90e0"/><rect x="53.5" y="426.556" width="1.6" height="1.6" fill="#2a90e0"/><path d="M60.3 425.056v3h-3.6" stroke="#f0f0f0" stroke-width="1.1" fill="none"/>
<path d="M63.0 420.756v8" stroke="#2a90e0" stroke-width="0.9" stroke-dasharray="0.9 0.9"/>
<path d="M65.1 420.556l2.6 2.4h-2.6z" fill="#4caf32"/><circle cx="66.5" cy="424.95599999999996" r="1.3" fill="#d02828"/><path d="M66.5 426.556v2.4" stroke="#ddd" stroke-width="1.1" stroke-dasharray="0.8 0.6"/>
<path d="M47.5 431.26399999999995l2.5 2-2.5 2z" fill="none" stroke="#5a5a5a" stroke-width="0.6"/>
<rect x="53.9" y="429.66399999999993" width="6.6" height="6.8" fill="#777" stroke="#ccc" stroke-width="0.7"/><ellipse cx="57.0" cy="432.26399999999995" rx="1.5" ry="1.9" fill="#c82020"/><circle cx="57.0" cy="432.26399999999995" r="0.8" fill="#eee"/><rect x="53.5" y="429.26399999999995" width="1.6" height="1.6" fill="#2a90e0"/><rect x="59.3" y="429.26399999999995" width="1.6" height="1.6" fill="#2a90e0"/><rect x="53.5" y="435.06399999999996" width="1.6" height="1.6" fill="#2a90e0"/><path d="M60.3 433.56399999999996v3h-3.6" stroke="#f0f0f0" stroke-width="1.1" fill="none"/>
<path d="M63.0 429.26399999999995v8" stroke="#2a90e0" stroke-width="0.9" stroke-dasharray="0.9 0.9"/>
<path d="M65.1 429.06399999999996l2.6 2.4h-2.6z" fill="#4caf32"/><circle cx="66.5" cy="433.46399999999994" r="1.3" fill="#d02828"/><path d="M66.5 435.06399999999996v2.4" stroke="#ddd" stroke-width="1.1" stroke-dasharray="0.8 0.6"/>
<path d="M47.5 439.772l2.5 2-2.5 2z" fill="none" stroke="#5a5a5a" stroke-width="0.6"/>
<rect x="53.9" y="438.17199999999997" width="6.6" height="6.8" fill="#777" stroke="#ccc" stroke-width="0.7"/><ellipse cx="57.0" cy="440.772" rx="1.5" ry="1.9" fill="#c82020"/><circle cx="57.0" cy="440.772" r="0.8" fill="#eee"/><rect x="53.5" y="437.772" width="1.6" height="1.6" fill="#2a90e0"/><rect x="59.3" y="437.772" width="1.6" height="1.6" fill="#2a90e0"/><rect x="53.5" y="443.572" width="1.6" height="1.6" fill="#2a90e0"/><path d="M60.3 442.072v3h-3.6" stroke="#f0f0f0" stroke-width="1.1" fill="none"/>
<path d="M63.0 437.772v8" stroke="#2a90e0" stroke-width="0.9" stroke-dasharray="0.9 0.9"/>
<rect x="65.5" y="437.772" width="2" height="8" fill="#999"/><path d="M66.5 437.772v8" stroke="#f0f0f0" stroke-width="1.3" stroke-dasharray="0.9 0.7"/>
<path d="M50.5 448.78v3.2h-3.2z" fill="#7a7a7a"/>
<rect x="53.9" y="446.67999999999995" width="6.6" height="6.8" fill="#777" stroke="#ccc" stroke-width="0.7"/><ellipse cx="57.0" cy="449.28" rx="1.5" ry="1.9" fill="#c82020"/><circle cx="57.0" cy="449.28" r="0.8" fill="#eee"/><rect x="53.5" y="446.28" width="1.6" height="1.6" fill="#2a90e0"/><rect x="59.3" y="446.28" width="1.6" height="1.6" fill="#2a90e0"/><rect x="53.5" y="452.08" width="1.6" height="1.6" fill="#2a90e0"/><path d="M60.3 450.58v3h-3.6" stroke="#f0f0f0" stroke-width="1.1" fill="none"/>
<path d="M63.0 446.28v8" stroke="#2a90e0" stroke-width="0.9" stroke-dasharray="0.9 0.9"/>
<rect x="65.5" y="446.28" width="2" height="8" fill="#999"/><path d="M66.5 446.28v8" stroke="#f0f0f0" stroke-width="1.3" stroke-dasharray="0.9 0.7"/>
<rect x="62.0" y="456.48799999999994" width="8" height="4.8" rx="2.2" fill="none" stroke="#ccc" stroke-width="0.8"/>
<path d="M56.0 465.296l2.5 2-2.5 2z" fill="none" stroke="#5a5a5a" stroke-width="0.6"/>
<rect x="62.65" y="463.05" width="1.3" height="1.3" fill="#d8d8d8"/>
<rect x="62.65" y="465.35" width="1.3" height="1.3" fill="#d8d8d8"/>
<rect x="62.65" y="467.65" width="1.3" height="1.3" fill="#d8d8d8"/>
<rect x="62.65" y="469.95" width="1.3" height="1.3" fill="#d8d8d8"/>
<rect x="66.35" y="463.05" width="1.3" height="1.3" fill="#d8d8d8"/>
<rect x="66.35" y="465.35" width="1.3" height="1.3" fill="#d8d8d8"/>
<rect x="66.35" y="467.65" width="1.3" height="1.3" fill="#d8d8d8"/>
<rect x="66.35" y="469.95" width="1.3" height="1.3" fill="#d8d8d8"/>
<path d="M56.0 473.804l2.5 2-2.5 2z" fill="none" stroke="#5a5a5a" stroke-width="0.6"/>
<rect x="62.65" y="471.55" width="1.3" height="1.3" fill="#d8d8d8"/>
<rect x="62.65" y="473.85" width="1.3" height="1.3" fill="#d8d8d8"/>
<rect x="62.65" y="476.15" width="1.3" height="1.3" fill="#d8d8d8"/>
<rect x="62.65" y="478.45" width="1.3" height="1.3" fill="#d8d8d8"/>
<rect x="66.35" y="471.55" width="1.3" height="1.3" fill="#d8d8d8"/>
<rect x="66.35" y="473.85" width="1.3" height="1.3" fill="#d8d8d8"/>
<rect x="66.35" y="476.15" width="1.3" height="1.3" fill="#d8d8d8"/>
<rect x="66.35" y="478.45" width="1.3" height="1.3" fill="#d8d8d8"/>
<path d="M56.0 482.31199999999995l2.5 2-2.5 2z" fill="none" stroke="#5a5a5a" stroke-width="0.6"/>
<rect x="62.65" y="480.06" width="1.3" height="1.3" fill="#d8d8d8"/>
<rect x="62.65" y="482.36" width="1.3" height="1.3" fill="#d8d8d8"/>
<rect x="62.65" y="484.66" width="1.3" height="1.3" fill="#d8d8d8"/>
<rect x="62.65" y="486.96" width="1.3" height="1.3" fill="#d8d8d8"/>
<rect x="66.35" y="480.06" width="1.3" height="1.3" fill="#d8d8d8"/>
<rect x="66.35" y="482.36" width="1.3" height="1.3" fill="#d8d8d8"/>
<rect x="66.35" y="484.66" width="1.3" height="1.3" fill="#d8d8d8"/>
<rect x="66.35" y="486.96" width="1.3" height="1.3" fill="#d8d8d8"/>
<path d="M56.0 490.81999999999994l2.5 2-2.5 2z" fill="none" stroke="#5a5a5a" stroke-width="0.6"/>
<rect x="62.65" y="488.57" width="1.3" height="1.3" fill="#d8d8d8"/>
<rect x="62.65" y="490.87" width="1.3" height="1.3" fill="#d8d8d8"/>
<rect x="62.65" y="493.17" width="1.3" height="1.3" fill="#d8d8d8"/>
<rect x="62.65" y="495.47" width="1.3" height="1.3" fill="#d8d8d8"/>
<rect x="66.35" y="488.57" width="1.3" height="1.3" fill="#d8d8d8"/>
<rect x="66.35" y="490.87" width="1.3" height="1.3" fill="#d8d8d8"/>
<rect x="66.35" y="493.17" width="1.3" height="1.3" fill="#d8d8d8"/>
<rect x="66.35" y="495.47" width="1.3" height="1.3" fill="#d8d8d8"/>
<path d="M56.0 499.328l2.5 2-2.5 2z" fill="none" stroke="#5a5a5a" stroke-width="0.6"/>
<rect x="62.65" y="497.08" width="1.3" height="1.3" fill="#d8d8d8"/>
<rect x="62.65" y="499.38" width="1.3" height="1.3" fill="#d8d8d8"/>
<rect x="62.65" y="501.68" width="1.3" height="1.3" fill="#d8d8d8"/>
<rect x="62.65" y="503.98" width="1.3" height="1.3" fill="#d8d8d8"/>
<rect x="66.35" y="497.08" width="1.3" height="1.3" fill="#d8d8d8"/>
<rect x="66.35" y="499.38" width="1.3" height="1.3" fill="#d8d8d8"/>
<rect x="66.35" y="501.68" width="1.3" height="1.3" fill="#d8d8d8"/>
<rect x="66.35" y="503.98" width="1.3" height="1.3" fill="#d8d8d8"/>
<path d="M56.0 507.83599999999996l2.5 2-2.5 2z" fill="none" stroke="#5a5a5a" stroke-width="0.6"/>
<path d="M68.5 506.33599999999996h-6v6.5h6M67.5 508.33599999999996h-3v2.5h3" fill="none" stroke="#e0e0e0" stroke-width="0.9"/>
<path d="M71.0 506.33599999999996h6l-1.5 4h-3z" fill="#eee"/><rect x="72.5" y="510.83599999999996" width="3" height="2.5" fill="#2a90e0"/>
<path d="M63.5 520.3439999999999a2.5 2.5 0 1 1 3.5-3" fill="none" stroke="#eee" stroke-width="1.3"/>
<path d="M71.5 514.3439999999999v8" stroke="#2a90e0" stroke-width="0.9" stroke-dasharray="0.9 0.9"/><path d="M73.6 514.1439999999999l2.6 2.4h-2.6z" fill="#4caf32"/><circle cx="75.0" cy="518.544" r="1.3" fill="#d02828"/><path d="M75.0 520.1439999999999v2.4" stroke="#ddd" stroke-width="1.1" stroke-dasharray="0.8 0.6"/>
<path d="M63.5 528.852a2.5 2.5 0 1 1 3.5-3" fill="none" stroke="#eee" stroke-width="1.3"/>
<path d="M71.5 522.852v8" stroke="#2a90e0" stroke-width="0.9" stroke-dasharray="0.9 0.9"/><path d="M73.6 522.6519999999999l2.6 2.4h-2.6z" fill="#4caf32"/><circle cx="75.0" cy="527.052" r="1.3" fill="#d02828"/><path d="M75.0 528.6519999999999v2.4" stroke="#ddd" stroke-width="1.1" stroke-dasharray="0.8 0.6"/>
<path d="M47.5 533.3599999999999l2.5 2-2.5 2z" fill="none" stroke="#5a5a5a" stroke-width="0.6"/>
<rect x="53.9" y="531.7599999999999" width="6.6" height="6.8" fill="#777" stroke="#ccc" stroke-width="0.7"/><ellipse cx="57.0" cy="534.3599999999999" rx="1.5" ry="1.9" fill="#c82020"/><circle cx="57.0" cy="534.3599999999999" r="0.8" fill="#eee"/><rect x="53.5" y="531.3599999999999" width="1.6" height="1.6" fill="#2a90e0"/><rect x="59.3" y="531.3599999999999" width="1.6" height="1.6" fill="#2a90e0"/><rect x="53.5" y="537.1599999999999" width="1.6" height="1.6" fill="#2a90e0"/><path d="M60.3 535.6599999999999v3h-3.6" stroke="#f0f0f0" stroke-width="1.1" fill="none"/>
<path d="M63.0 531.3599999999999v8" stroke="#2a90e0" stroke-width="0.9" stroke-dasharray="0.9 0.9"/>
<rect x="65.5" y="531.3599999999999" width="2" height="8" fill="#999"/><path d="M66.5 531.3599999999999v8" stroke="#f0f0f0" stroke-width="1.3" stroke-dasharray="0.9 0.7"/>
<path d="M47.5 541.8679999999999l2.5 2-2.5 2z" fill="none" stroke="#5a5a5a" stroke-width="0.6"/>
<rect x="53.9" y="540.2679999999999" width="6.6" height="6.8" fill="#777" stroke="#ccc" stroke-width="0.7"/><ellipse cx="57.0" cy="542.8679999999999" rx="1.5" ry="1.9" fill="#c82020"/><circle cx="57.0" cy="542.8679999999999" r="0.8" fill="#eee"/><rect x="53.5" y="539.8679999999999" width="1.6" height="1.6" fill="#2a90e0"/><rect x="59.3" y="539.8679999999999" width="1.6" height="1.6" fill="#2a90e0"/><rect x="53.5" y="545.6679999999999" width="1.6" height="1.6" fill="#2a90e0"/><path d="M60.3 544.1679999999999v3h-3.6" stroke="#f0f0f0" stroke-width="1.1" fill="none"/>
<path d="M63.0 539.8679999999999v8" stroke="#2a90e0" stroke-width="0.9" stroke-dasharray="0.9 0.9"/>
<rect x="65.5" y="539.8679999999999" width="2" height="8" fill="#999"/><path d="M66.5 539.8679999999999v8" stroke="#f0f0f0" stroke-width="1.3" stroke-dasharray="0.9 0.7"/>
<path d="M47.5 550.376l2.5 2-2.5 2z" fill="none" stroke="#5a5a5a" stroke-width="0.6"/>
<rect x="53.9" y="548.776" width="6.6" height="6.8" fill="#777" stroke="#ccc" stroke-width="0.7"/><ellipse cx="57.0" cy="551.376" rx="1.5" ry="1.9" fill="#c82020"/><circle cx="57.0" cy="551.376" r="0.8" fill="#eee"/><rect x="53.5" y="548.376" width="1.6" height="1.6" fill="#2a90e0"/><rect x="59.3" y="548.376" width="1.6" height="1.6" fill="#2a90e0"/><rect x="53.5" y="554.1759999999999" width="1.6" height="1.6" fill="#2a90e0"/><path d="M60.3 552.6759999999999v3h-3.6" stroke="#f0f0f0" stroke-width="1.1" fill="none"/>
<path d="M63.0 548.376v8" stroke="#2a90e0" stroke-width="0.9" stroke-dasharray="0.9 0.9"/>
<rect x="65.5" y="548.376" width="2" height="8" fill="#999"/><path d="M66.5 548.376v8" stroke="#f0f0f0" stroke-width="1.3" stroke-dasharray="0.9 0.7"/>
<path d="M47.5 558.884l2.5 2-2.5 2z" fill="none" stroke="#5a5a5a" stroke-width="0.6"/>
<rect x="53.9" y="557.284" width="6.6" height="6.8" fill="#777" stroke="#ccc" stroke-width="0.7"/><ellipse cx="57.0" cy="559.884" rx="1.5" ry="1.9" fill="#c82020"/><circle cx="57.0" cy="559.884" r="0.8" fill="#eee"/><rect x="53.5" y="556.884" width="1.6" height="1.6" fill="#2a90e0"/><rect x="59.3" y="556.884" width="1.6" height="1.6" fill="#2a90e0"/><rect x="53.5" y="562.684" width="1.6" height="1.6" fill="#2a90e0"/><path d="M60.3 561.184v3h-3.6" stroke="#f0f0f0" stroke-width="1.1" fill="none"/>
<path d="M63.0 556.884v8" stroke="#2a90e0" stroke-width="0.9" stroke-dasharray="0.9 0.9"/>
<rect x="65.5" y="556.884" width="2" height="8" fill="#999"/><path d="M66.5 556.884v8" stroke="#f0f0f0" stroke-width="1.3" stroke-dasharray="0.9 0.7"/>
<path d="M42.0 567.8919999999999v3.2h-3.2z" fill="#7a7a7a"/>
<rect x="45.0" y="565.3919999999999" width="3" height="2.5" fill="#e8c050"/><rect x="48.0" y="565.3919999999999" width="3" height="2.5" fill="#8ac8f0"/><rect x="46.5" y="568.3919999999999" width="7" height="4.5" fill="#e8e8e8"/><rect x="47.0" y="570.8919999999999" width="2" height="1.5" fill="#2a90e0"/><path d="M50.0 568.3919999999999v-2.5h2v2.5" stroke="#e8e8e8" stroke-width="0.8" fill="none"/><path d="M49.5 568.8919999999999v3.5M51.5 568.8919999999999v3.5" stroke="#444" stroke-width="0.5"/>
<path d="M47.5 575.9l2.5 2-2.5 2z" fill="none" stroke="#5a5a5a" stroke-width="0.6"/>
<path d="M60.0 574.4h-6v6.5h6M59.0 576.4h-3v2.5h3" fill="none" stroke="#e0e0e0" stroke-width="0.9"/>
<path d="M63.5 574.4l-2 3.5v3h4v-3z" fill="#2a90e0"/><path d="M65.5 576.9h1.5M65.5 579.4h1.5" stroke="#ddd" stroke-width="0.8"/>
<path d="M50.5 584.9079999999999v3.2h-3.2z" fill="#7a7a7a"/>
<rect x="53.9" y="582.8079999999999" width="6.6" height="6.8" fill="#777" stroke="#ccc" stroke-width="0.7"/><ellipse cx="57.0" cy="585.4079999999999" rx="1.5" ry="1.9" fill="#c82020"/><circle cx="57.0" cy="585.4079999999999" r="0.8" fill="#eee"/><rect x="53.5" y="582.4079999999999" width="1.6" height="1.6" fill="#2a90e0"/><rect x="59.3" y="582.4079999999999" width="1.6" height="1.6" fill="#2a90e0"/><rect x="53.5" y="588.2079999999999" width="1.6" height="1.6" fill="#2a90e0"/><path d="M60.3 586.7079999999999v3h-3.6" stroke="#f0f0f0" stroke-width="1.1" fill="none"/>
<path d="M63.0 582.4079999999999v8" stroke="#2a90e0" stroke-width="0.9" stroke-dasharray="0.9 0.9"/>
<rect x="65.5" y="582.4079999999999" width="2" height="8" fill="#999"/><path d="M66.5 582.4079999999999v8" stroke="#f0f0f0" stroke-width="1.3" stroke-dasharray="0.9 0.7"/>
<rect x="62.0" y="592.616" width="8" height="4.8" rx="2.2" fill="none" stroke="#ccc" stroke-width="0.8"/>
<path d="M56.0 601.424l2.5 2-2.5 2z" fill="none" stroke="#5a5a5a" stroke-width="0.6"/>
<rect x="62.65" y="599.17" width="1.3" height="1.3" fill="#d8d8d8"/>
<rect x="62.65" y="601.47" width="1.3" height="1.3" fill="#d8d8d8"/>
<rect x="62.65" y="603.77" width="1.3" height="1.3" fill="#d8d8d8"/>
<rect x="62.65" y="606.07" width="1.3" height="1.3" fill="#d8d8d8"/>
<rect x="66.35" y="599.17" width="1.3" height="1.3" fill="#d8d8d8"/>
<rect x="66.35" y="601.47" width="1.3" height="1.3" fill="#d8d8d8"/>
<rect x="66.35" y="603.77" width="1.3" height="1.3" fill="#d8d8d8"/>
<rect x="66.35" y="606.07" width="1.3" height="1.3" fill="#d8d8d8"/>
<path d="M56.0 609.932l2.5 2-2.5 2z" fill="none" stroke="#5a5a5a" stroke-width="0.6"/>
<rect x="62.65" y="607.68" width="1.3" height="1.3" fill="#d8d8d8"/>
<rect x="62.65" y="609.98" width="1.3" height="1.3" fill="#d8d8d8"/>
<rect x="62.65" y="612.28" width="1.3" height="1.3" fill="#d8d8d8"/>
<rect x="62.65" y="614.58" width="1.3" height="1.3" fill="#d8d8d8"/>
<rect x="66.35" y="607.68" width="1.3" height="1.3" fill="#d8d8d8"/>
<rect x="66.35" y="609.98" width="1.3" height="1.3" fill="#d8d8d8"/>
<rect x="66.35" y="612.28" width="1.3" height="1.3" fill="#d8d8d8"/>
<rect x="66.35" y="614.58" width="1.3" height="1.3" fill="#d8d8d8"/>
<path d="M56.0 618.4399999999999l2.5 2-2.5 2z" fill="none" stroke="#5a5a5a" stroke-width="0.6"/>
<rect x="62.65" y="616.19" width="1.3" height="1.3" fill="#d8d8d8"/>
<rect x="62.65" y="618.49" width="1.3" height="1.3" fill="#d8d8d8"/>
<rect x="62.65" y="620.79" width="1.3" height="1.3" fill="#d8d8d8"/>
<rect x="62.65" y="623.09" width="1.3" height="1.3" fill="#d8d8d8"/>
<rect x="66.35" y="616.19" width="1.3" height="1.3" fill="#d8d8d8"/>
<rect x="66.35" y="618.49" width="1.3" height="1.3" fill="#d8d8d8"/>
<rect x="66.35" y="620.79" width="1.3" height="1.3" fill="#d8d8d8"/>
<rect x="66.35" y="623.09" width="1.3" height="1.3" fill="#d8d8d8"/>
<path d="M56.0 626.948l2.5 2-2.5 2z" fill="none" stroke="#5a5a5a" stroke-width="0.6"/>
<rect x="62.65" y="624.70" width="1.3" height="1.3" fill="#d8d8d8"/>
<rect x="62.65" y="627.00" width="1.3" height="1.3" fill="#d8d8d8"/>
<rect x="62.65" y="629.30" width="1.3" height="1.3" fill="#d8d8d8"/>
<rect x="62.65" y="631.60" width="1.3" height="1.3" fill="#d8d8d8"/>
<rect x="66.35" y="624.70" width="1.3" height="1.3" fill="#d8d8d8"/>
<rect x="66.35" y="627.00" width="1.3" height="1.3" fill="#d8d8d8"/>
<rect x="66.35" y="629.30" width="1.3" height="1.3" fill="#d8d8d8"/>
<rect x="66.35" y="631.60" width="1.3" height="1.3" fill="#d8d8d8"/>
<path d="M56.0 635.4559999999999l2.5 2-2.5 2z" fill="none" stroke="#5a5a5a" stroke-width="0.6"/>
<rect x="62.65" y="633.21" width="1.3" height="1.3" fill="#d8d8d8"/>
<rect x="62.65" y="635.51" width="1.3" height="1.3" fill="#d8d8d8"/>
<rect x="62.65" y="637.81" width="1.3" height="1.3" fill="#d8d8d8"/>
<rect x="62.65" y="640.11" width="1.3" height="1.3" fill="#d8d8d8"/>
<rect x="66.35" y="633.21" width="1.3" height="1.3" fill="#d8d8d8"/>
<rect x="66.35" y="635.51" width="1.3" height="1.3" fill="#d8d8d8"/>
<rect x="66.35" y="637.81" width="1.3" height="1.3" fill="#d8d8d8"/>
<rect x="66.35" y="640.11" width="1.3" height="1.3" fill="#d8d8d8"/>
<path d="M56.0 643.9639999999999l2.5 2-2.5 2z" fill="none" stroke="#5a5a5a" stroke-width="0.6"/>
<path d="M68.5 642.4639999999999h-6v6.5h6M67.5 644.4639999999999h-3v2.5h3" fill="none" stroke="#e0e0e0" stroke-width="0.9"/>
<path d="M71.0 642.4639999999999h6l-1.5 4h-3z" fill="#eee"/><rect x="72.5" y="646.9639999999999" width="3" height="2.5" fill="#2a90e0"/>
<path d="M47.5 652.472l2.5 2-2.5 2z" fill="none" stroke="#5a5a5a" stroke-width="0.6"/>
<rect x="53.9" y="650.872" width="6.6" height="6.8" fill="#777" stroke="#ccc" stroke-width="0.7"/><ellipse cx="57.0" cy="653.472" rx="1.5" ry="1.9" fill="#c82020"/><circle cx="57.0" cy="653.472" r="0.8" fill="#eee"/><rect x="53.5" y="650.472" width="1.6" height="1.6" fill="#2a90e0"/><rect x="59.3" y="650.472" width="1.6" height="1.6" fill="#2a90e0"/><rect x="53.5" y="656.2719999999999" width="1.6" height="1.6" fill="#2a90e0"/><path d="M60.3 654.7719999999999v3h-3.6" stroke="#f0f0f0" stroke-width="1.1" fill="none"/>
<path d="M63.0 650.472v8" stroke="#2a90e0" stroke-width="0.9" stroke-dasharray="0.9 0.9"/>
<rect x="65.5" y="650.472" width="2" height="8" fill="#999"/><path d="M66.5 650.472v8" stroke="#f0f0f0" stroke-width="1.3" stroke-dasharray="0.9 0.7"/>
<path d="M42.0 661.48v3.2h-3.2z" fill="#7a7a7a"/>
<rect x="45.0" y="658.98" width="3" height="2.5" fill="#e8c050"/><rect x="48.0" y="658.98" width="3" height="2.5" fill="#8ac8f0"/><rect x="46.5" y="661.98" width="7" height="4.5" fill="#e8e8e8"/><rect x="47.0" y="664.48" width="2" height="1.5" fill="#2a90e0"/><path d="M50.0 661.98v-2.5h2v2.5" stroke="#e8e8e8" stroke-width="0.8" fill="none"/><path d="M49.5 662.48v3.5M51.5 662.48v3.5" stroke="#444" stroke-width="0.5"/>
<path d="M47.5 669.4879999999999l2.5 2-2.5 2z" fill="none" stroke="#5a5a5a" stroke-width="0.6"/>
<path d="M60.0 667.9879999999999h-6v6.5h6M59.0 669.9879999999999h-3v2.5h3" fill="none" stroke="#e0e0e0" stroke-width="0.9"/>
<path d="M63.5 667.9879999999999l-2 3.5v3h4v-3z" fill="#2a90e0"/><path d="M65.5 670.4879999999999h1.5M65.5 672.9879999999999h1.5" stroke="#ddd" stroke-width="0.8"/>
<path d="M47.5 677.996l2.5 2-2.5 2z" fill="none" stroke="#5a5a5a" stroke-width="0.6"/>
<rect x="53.9" y="676.396" width="6.6" height="6.8" fill="#777" stroke="#ccc" stroke-width="0.7"/><ellipse cx="57.0" cy="678.996" rx="1.5" ry="1.9" fill="#c82020"/><circle cx="57.0" cy="678.996" r="0.8" fill="#eee"/><rect x="53.5" y="675.996" width="1.6" height="1.6" fill="#2a90e0"/><rect x="59.3" y="675.996" width="1.6" height="1.6" fill="#2a90e0"/><rect x="53.5" y="681.7959999999999" width="1.6" height="1.6" fill="#2a90e0"/><path d="M60.3 680.2959999999999v3h-3.6" stroke="#f0f0f0" stroke-width="1.1" fill="none"/>
<path d="M63.0 675.996v8" stroke="#2a90e0" stroke-width="0.9" stroke-dasharray="0.9 0.9"/>
<rect x="65.5" y="675.996" width="2" height="8" fill="#999"/><path d="M66.5 675.996v8" stroke="#f0f0f0" stroke-width="1.3" stroke-dasharray="0.9 0.7"/>
<path d="M47.5 686.5039999999999l2.5 2-2.5 2z" fill="none" stroke="#5a5a5a" stroke-width="0.6"/>
<rect x="53.9" y="684.9039999999999" width="6.6" height="6.8" fill="#777" stroke="#ccc" stroke-width="0.7"/><ellipse cx="57.0" cy="687.5039999999999" rx="1.5" ry="1.9" fill="#c82020"/><circle cx="57.0" cy="687.5039999999999" r="0.8" fill="#eee"/><rect x="53.5" y="684.5039999999999" width="1.6" height="1.6" fill="#2a90e0"/><rect x="59.3" y="684.5039999999999" width="1.6" height="1.6" fill="#2a90e0"/><rect x="53.5" y="690.3039999999999" width="1.6" height="1.6" fill="#2a90e0"/><path d="M60.3 688.8039999999999v3h-3.6" stroke="#f0f0f0" stroke-width="1.1" fill="none"/>
<path d="M63.0 684.5039999999999v8" stroke="#2a90e0" stroke-width="0.9" stroke-dasharray="0.9 0.9"/>
<rect x="65.5" y="684.5039999999999" width="2" height="8" fill="#999"/><path d="M66.5 684.5039999999999v8" stroke="#f0f0f0" stroke-width="1.3" stroke-dasharray="0.9 0.7"/>
</svg>
<div class="r" style="left:0.00px;top:697.00px;width:266.00px;height:11.00px;background:#333333;"></div>
<div class="r" style="left:15.00px;top:697.00px;width:17.50px;height:10.80px;background:#393939;box-sizing:border-box;border:1px solid #444;border-top:none;"></div>
<div class="t" style="left:18.50px;top:698.98px;font-size:7px;color:#d8d8d8;-webkit-text-stroke:0.12px #d8d8d8;transform:scaleX(0.8);transform-origin:0 0;">Tree</div>
<div class="t" style="left:36.00px;top:698.98px;font-size:7px;color:#d8d8d8;-webkit-text-stroke:0.12px #d8d8d8;transform:scaleX(0.8);transform-origin:0 0;">List</div>
<div class="r" style="left:266.00px;top:83.00px;width:796.00px;height:625.00px;background:#262626;"></div>
<div class="r" style="left:266.00px;top:83.00px;width:798.00px;height:14.50px;background:#232323;"></div>
<div class="r" style="left:266.00px;top:94.70px;width:798.00px;height:1.30px;background:#383838;"></div>
<div class="r" style="left:266.00px;top:96.00px;width:798.00px;height:1.20px;background:#1c1c1c;"></div>
<div class="r" style="left:267.00px;top:97.20px;width:796.00px;height:1.00px;background:#6a6a6a;"></div>
<div class="t" style="left:270.30px;top:84.98px;font-size:7px;color:#1e9be8;font-weight:bold;-webkit-text-stroke:0.05px #1e9be8;transform:scaleX(0.8607735184190265);transform-origin:0 0;">=HK1&amp;PFB/3</div>
<svg style="left:312;top:85" width="8" height="8" fill="none" stroke="#ddd" stroke-width="1"><path d="M2 2.2l3.8 3.8M5.8 2.2l-3.8 3.8"/></svg>
<div class="r" style="left:267.00px;top:94.00px;width:54.00px;height:2.10px;background:#0c6cbc;"></div>
<div class="r" style="left:267.00px;top:98.00px;width:2.00px;height:596.50px;background:#888;"></div>
<div class="r" style="left:268.50px;top:98.00px;width:794.20px;height:596.50px;background:#ffffff;"></div>
<div class="r" style="left:1060.40px;top:97.80px;width:2.30px;height:561.80px;background:#a8a8a8;"></div>
<div class="r" style="left:1062.70px;top:97.80px;width:1.80px;height:597.00px;background:#2d2d2d;"></div>
<div class="t" style="left:20.75px;width:600px;text-align:center;top:101.48px;font-size:4.5px;color:#555;">0</div>
<div class="t" style="left:103.80px;width:600px;text-align:center;top:101.48px;font-size:4.5px;color:#555;">1</div>
<div class="t" style="left:179.40px;width:600px;text-align:center;top:101.48px;font-size:4.5px;color:#555;">2</div>
<div class="t" style="left:255.00px;width:600px;text-align:center;top:101.48px;font-size:4.5px;color:#555;">3</div>
<div class="t" style="left:330.60px;width:600px;text-align:center;top:101.48px;font-size:4.5px;color:#555;">4</div>
<div class="t" style="left:406.20px;width:600px;text-align:center;top:101.48px;font-size:4.5px;color:#555;">5</div>
<div class="t" style="left:481.80px;width:600px;text-align:center;top:101.48px;font-size:4.5px;color:#555;">6</div>
<div class="t" style="left:557.40px;width:600px;text-align:center;top:101.48px;font-size:4.5px;color:#555;">7</div>
<div class="t" style="left:632.80px;width:600px;text-align:center;top:101.48px;font-size:4.5px;color:#555;">8</div>
<div class="t" style="left:715.40px;width:600px;text-align:center;top:101.48px;font-size:4.5px;color:#555;">9</div>
<div class="t" style="left:271.6px;top:463px;font-size:4.2px;color:#444;transform:translate(-50%,-50%) rotate(-90deg) scaleX(1.002);transform-origin:50% 50%;">Protected by copyright. Passing on as well as reproduction of this document, its utilization and communication of its contents are prohibited in as far as not expressly permitted.</div>
<div class="t" style="left:277.00px;top:621.64px;font-size:6px;color:#222;-webkit-text-stroke:0.1px #222;">2</div>
<div class="t" style="left:1048.00px;top:621.64px;font-size:6px;color:#222;-webkit-text-stroke:0.1px #222;">4</div>
<div class="t" style="left:291.00px;top:122.58px;font-size:13.6px;color:#111;-webkit-text-stroke:0.05px #111;transform:scaleX(1.029263568827881);transform-origin:0 0;">Pre-planning: Planning object overview</div>
<div class="t" style="right:242.00px;top:133.66px;font-size:5.6px;color:#222;-webkit-text-stroke:0.1px #222;">F40_008</div>
<svg style="left:0;top:0" width="1280" height="720" shape-rendering="auto">
<line x1="275.5" y1="98" x2="275.5" y2="629" stroke="#666" stroke-width="1"/>
<line x1="275" y1="108.2" x2="1060.4" y2="108.2" stroke="#666" stroke-width="1.1"/>
<line x1="366" y1="98" x2="366" y2="108.2" stroke="#666" stroke-width="1"/>
<line x1="441.6" y1="98" x2="441.6" y2="108.2" stroke="#666" stroke-width="1"/>
<line x1="517.2" y1="98" x2="517.2" y2="108.2" stroke="#666" stroke-width="1"/>
<line x1="592.8" y1="98" x2="592.8" y2="108.2" stroke="#666" stroke-width="1"/>
<line x1="668.4" y1="98" x2="668.4" y2="108.2" stroke="#666" stroke-width="1"/>
<line x1="744" y1="98" x2="744" y2="108.2" stroke="#666" stroke-width="1"/>
<line x1="819.6" y1="98" x2="819.6" y2="108.2" stroke="#666" stroke-width="1"/>
<line x1="895.2" y1="98" x2="895.2" y2="108.2" stroke="#666" stroke-width="1"/>
<line x1="970.4" y1="98" x2="970.4" y2="108.2" stroke="#666" stroke-width="1"/>
<line x1="290.5" y1="142" x2="1053.4" y2="142" stroke="#333" stroke-width="1.3"/>
<line x1="290.5" y1="523.201" x2="1053.4" y2="523.201" stroke="#222" stroke-width="1.5"/>
<line x1="290.5" y1="142" x2="290.5" y2="523.201" stroke="#333" stroke-width="1.3"/>
<line x1="1053.4" y1="142" x2="1053.4" y2="523.201" stroke="#333" stroke-width="1.3"/>
<line x1="290.5" y1="176.2" x2="1053.4" y2="176.2" stroke="#333" stroke-width="1.3"/>
<line x1="290.5" y1="191.28699999999998" x2="1053.4" y2="191.28699999999998" stroke="#3a3a3a" stroke-width="1.1"/>
<line x1="290.5" y1="206.374" x2="1053.4" y2="206.374" stroke="#3a3a3a" stroke-width="1.1"/>
<line x1="290.5" y1="221.46099999999998" x2="1053.4" y2="221.46099999999998" stroke="#3a3a3a" stroke-width="1.1"/>
<line x1="290.5" y1="236.548" x2="1053.4" y2="236.548" stroke="#3a3a3a" stroke-width="1.1"/>
<line x1="290.5" y1="251.635" x2="1053.4" y2="251.635" stroke="#3a3a3a" stroke-width="1.1"/>
<line x1="290.5" y1="266.722" x2="1053.4" y2="266.722" stroke="#3a3a3a" stroke-width="1.1"/>
<line x1="290.5" y1="281.80899999999997" x2="1053.4" y2="281.80899999999997" stroke="#3a3a3a" stroke-width="1.1"/>
<line x1="290.5" y1="296.89599999999996" x2="1053.4" y2="296.89599999999996" stroke="#3a3a3a" stroke-width="1.1"/>
<line x1="290.5" y1="311.98299999999995" x2="1053.4" y2="311.98299999999995" stroke="#3a3a3a" stroke-width="1.1"/>
<line x1="290.5" y1="327.07" x2="1053.4" y2="327.07" stroke="#3a3a3a" stroke-width="1.1"/>
<line x1="290.5" y1="342.157" x2="1053.4" y2="342.157" stroke="#3a3a3a" stroke-width="1.1"/>
<line x1="290.5" y1="357.24399999999997" x2="1053.4" y2="357.24399999999997" stroke="#3a3a3a" stroke-width="1.1"/>
<line x1="290.5" y1="372.331" x2="1053.4" y2="372.331" stroke="#3a3a3a" stroke-width="1.1"/>
<line x1="290.5" y1="387.418" x2="1053.4" y2="387.418" stroke="#3a3a3a" stroke-width="1.1"/>
<line x1="290.5" y1="402.505" x2="1053.4" y2="402.505" stroke="#3a3a3a" stroke-width="1.1"/>
<line x1="290.5" y1="417.592" x2="1053.4" y2="417.592" stroke="#3a3a3a" stroke-width="1.1"/>
<line x1="290.5" y1="432.679" x2="1053.4" y2="432.679" stroke="#3a3a3a" stroke-width="1.1"/>
<line x1="290.5" y1="447.76599999999996" x2="1053.4" y2="447.76599999999996" stroke="#3a3a3a" stroke-width="1.1"/>
<line x1="290.5" y1="462.853" x2="1053.4" y2="462.853" stroke="#3a3a3a" stroke-width="1.1"/>
<line x1="290.5" y1="477.94" x2="1053.4" y2="477.94" stroke="#3a3a3a" stroke-width="1.1"/>
<line x1="290.5" y1="493.027" x2="1053.4" y2="493.027" stroke="#3a3a3a" stroke-width="1.1"/>
<line x1="290.5" y1="508.114" x2="1053.4" y2="508.114" stroke="#3a3a3a" stroke-width="1.1"/>
<line x1="437.8" y1="142" x2="437.8" y2="523.201" stroke="#444" stroke-width="1.0"/>
<line x1="649.4" y1="142" x2="649.4" y2="523.201" stroke="#444" stroke-width="1.0"/>
<line x1="762.6" y1="142" x2="762.6" y2="523.201" stroke="#444" stroke-width="1.0"/>
<line x1="826.8" y1="142" x2="826.8" y2="523.201" stroke="#444" stroke-width="1.0"/>
<line x1="879.6" y1="142" x2="879.6" y2="523.201" stroke="#444" stroke-width="1.0"/>
<line x1="962.6" y1="142" x2="962.6" y2="523.201" stroke="#444" stroke-width="1.0"/>
<line x1="649.4" y1="161" x2="762.6" y2="161" stroke="#555" stroke-width="1.0"/>
<line x1="687.3" y1="161" x2="687.3" y2="523.201" stroke="#777" stroke-width="1.0"/>
<line x1="725.0" y1="161" x2="725.0" y2="523.201" stroke="#777" stroke-width="1.0"/>
<line x1="303.0" y1="176.2" x2="303.0" y2="523.201" stroke="#999" stroke-width="1.0"/>
<line x1="316.4" y1="176.2" x2="316.4" y2="523.201" stroke="#444" stroke-width="1.0"/>
<line x1="591.2" y1="176.2" x2="591.2" y2="523.201" stroke="#999" stroke-width="1.0"/>
<line x1="600.7" y1="176.2" x2="600.7" y2="523.201" stroke="#333" stroke-width="1.0"/>
<line x1="610.2" y1="176.2" x2="610.2" y2="523.201" stroke="#888" stroke-width="1.0"/>
<line x1="619.5" y1="176.2" x2="619.5" y2="523.201" stroke="#333" stroke-width="1.0"/>
<line x1="581.3" y1="176.2" x2="581.3" y2="523.201" stroke="#111" stroke-width="1.6"/>
<line x1="629.2" y1="176.2" x2="629.2" y2="523.201" stroke="#111" stroke-width="1.6"/>
<line x1="581.3" y1="176.2" x2="615.5" y2="142" stroke="#333" stroke-width="0.9"/>
<line x1="591.2" y1="176.2" x2="625.4000000000001" y2="142" stroke="#333" stroke-width="0.9"/>
<line x1="600.7" y1="176.2" x2="634.9000000000001" y2="142" stroke="#333" stroke-width="0.9"/>
<line x1="610.2" y1="176.2" x2="644.4000000000001" y2="142" stroke="#333" stroke-width="0.9"/>
<line x1="619.5" y1="176.2" x2="649.4" y2="146.3" stroke="#333" stroke-width="0.9"/>
<line x1="629.2" y1="176.2" x2="649.4" y2="156.00000000000006" stroke="#333" stroke-width="0.9"/>
</svg>
<div class="t" style="left:598.75px;top:163.20px;font-size:3.8px;color:#666;transform:translate(-50%,-50%) rotate(-45deg) scaleX(0.741);">Digital PLC outputs (DO)</div>
<div class="t" style="left:608.45px;top:163.20px;font-size:3.8px;color:#666;transform:translate(-50%,-50%) rotate(-45deg) scaleX(0.723);">Analog PLC outputs (AO)</div>
<div class="t" style="left:617.95px;top:163.20px;font-size:3.8px;color:#666;transform:translate(-50%,-50%) rotate(-45deg) scaleX(0.825);">Digital PLC inputs (DI)</div>
<div class="t" style="left:627.35px;top:163.20px;font-size:3.8px;color:#666;transform:translate(-50%,-50%) rotate(-45deg) scaleX(0.802);">Analog PLC inputs (AI)</div>
<div class="t" style="left:636.85px;top:163.20px;font-size:3.8px;color:#666;transform:translate(-50%,-50%) rotate(-45deg) scaleX(0.901);">PLC modules (Total)</div>
<div class="t" style="left:72.00px;width:600px;text-align:center;top:154.39px;font-size:6.8px;color:#222;-webkit-text-stroke:0.05px #222;transform:scaleX(0.95);transform-origin:50% 0;">Planning</div>
<div class="t" style="left:72.00px;width:600px;text-align:center;top:162.89px;font-size:6.8px;color:#222;-webkit-text-stroke:0.05px #222;transform:scaleX(0.95);transform-origin:50% 0;">object</div>
<div class="t" style="left:198.50px;width:600px;text-align:center;top:150.89px;font-size:6.8px;color:#222;-webkit-text-stroke:0.05px #222;transform:scaleX(0.95);transform-origin:50% 0;">Description</div>
<div class="t" style="left:198.50px;width:600px;text-align:center;top:165.89px;font-size:6.8px;color:#222;-webkit-text-stroke:0.05px #222;transform:scaleX(0.95);transform-origin:50% 0;">Remark</div>
<div class="t" style="left:406.00px;width:600px;text-align:center;top:149.57px;font-size:8.8px;color:#222;-webkit-text-stroke:0.05px #222;">Total work [h]</div>
<div class="t" style="left:368.20px;width:600px;text-align:center;top:165.99px;font-size:6.8px;color:#222;-webkit-text-stroke:0.05px #222;transform:scaleX(0.95);transform-origin:50% 0;">Planning</div>
<div class="t" style="left:406.00px;width:600px;text-align:center;top:165.99px;font-size:6.8px;color:#222;-webkit-text-stroke:0.05px #222;transform:scaleX(0.95);transform-origin:50% 0;">Construction</div>
<div class="t" style="left:443.80px;width:600px;text-align:center;top:165.99px;font-size:6.8px;color:#222;-webkit-text-stroke:0.05px #222;transform:scaleX(0.95);transform-origin:50% 0;">Software</div>
<div class="t" style="left:495.00px;width:600px;text-align:center;top:145.79px;font-size:6.8px;color:#222;-webkit-text-stroke:0.05px #222;transform:scaleX(0.95);transform-origin:50% 0;">Total</div>
<div class="t" style="left:495.00px;width:600px;text-align:center;top:154.39px;font-size:6.8px;color:#222;-webkit-text-stroke:0.05px #222;transform:scaleX(0.95);transform-origin:50% 0;">power</div>
<div class="t" style="left:495.00px;width:600px;text-align:center;top:162.99px;font-size:6.8px;color:#222;-webkit-text-stroke:0.05px #222;transform:scaleX(0.95);transform-origin:50% 0;">consumption</div>
<div class="t" style="left:495.00px;width:600px;text-align:center;top:171.59px;font-size:6.8px;color:#222;-webkit-text-stroke:0.05px #222;transform:scaleX(0.95);transform-origin:50% 0;">[kW]</div>
<div class="t" style="left:550.50px;width:600px;text-align:center;top:158.69px;font-size:6.8px;color:#222;-webkit-text-stroke:0.05px #222;transform:scaleX(0.95);transform-origin:50% 0;">Total price [€]</div>
<div class="t" style="left:625.00px;width:600px;text-align:center;top:150.09px;font-size:6.8px;color:#222;-webkit-text-stroke:0.05px #222;transform:scaleX(0.95);transform-origin:50% 0;">Linked with</div>
<div class="t" style="left:625.00px;width:600px;text-align:center;top:158.59px;font-size:6.8px;color:#222;-webkit-text-stroke:0.05px #222;transform:scaleX(0.95);transform-origin:50% 0;">superior</div>
<div class="t" style="left:625.00px;width:600px;text-align:center;top:167.09px;font-size:6.8px;color:#222;-webkit-text-stroke:0.05px #222;transform:scaleX(0.95);transform-origin:50% 0;">segments</div>
<div class="t" style="left:700.30px;width:600px;text-align:center;top:154.39px;font-size:6.8px;color:#222;-webkit-text-stroke:0.05px #222;transform:scaleX(0.95);transform-origin:50% 0;">Linked</div>
<div class="t" style="left:700.30px;width:600px;text-align:center;top:162.89px;font-size:6.8px;color:#222;-webkit-text-stroke:0.05px #222;transform:scaleX(0.95);transform-origin:50% 0;">segments</div>
<div class="t" style="right:978.00px;top:180.84px;font-size:7.6px;color:#1a1a1a;-webkit-text-stroke:0.05px #1a1a1a;">1</div>
<div class="t" style="right:964.80px;top:180.84px;font-size:7.6px;color:#1a1a1a;-webkit-text-stroke:0.05px #1a1a1a;">3</div>
<div class="t" style="left:318.60px;top:181.10px;font-size:5.9px;color:#1a1a1a;-webkit-text-stroke:0.1px #1a1a1a;transform:scaleX(0.95);transform-origin:0 0;">HK1 HW1 EU 101</div>
<div class="t" style="left:441.60px;top:178.10px;font-size:5.9px;color:#1a1a1a;-webkit-text-stroke:0.1px #1a1a1a;transform:scaleX(0.96);transform-origin:0 0;">Feed medium</div>
<div class="t" style="left:286.25px;width:600px;text-align:center;top:181.23px;font-size:6.2px;color:#1a1a1a;-webkit-text-stroke:0.1px #1a1a1a;">2</div>
<div class="t" style="left:305.45px;width:600px;text-align:center;top:181.23px;font-size:6.2px;color:#1a1a1a;-webkit-text-stroke:0.1px #1a1a1a;">1</div>
<div class="t" style="right:595.40px;top:181.19px;font-size:6.8px;color:#1a1a1a;-webkit-text-stroke:0.05px #1a1a1a;">5.5</div>
<div class="t" style="right:558.20px;top:181.19px;font-size:6.8px;color:#1a1a1a;-webkit-text-stroke:0.05px #1a1a1a;">8.0</div>
<div class="t" style="right:520.80px;top:181.19px;font-size:6.8px;color:#1a1a1a;-webkit-text-stroke:0.05px #1a1a1a;">4.5</div>
<div class="t" style="right:456.60px;top:181.19px;font-size:6.8px;color:#1a1a1a;-webkit-text-stroke:0.05px #1a1a1a;">0.6</div>
<div class="t" style="right:404.00px;top:181.19px;font-size:6.8px;color:#1a1a1a;-webkit-text-stroke:0.05px #1a1a1a;">3650.00</div>
<div class="t" style="left:881.90px;top:180.50px;font-size:5.9px;color:#1a1a1a;-webkit-text-stroke:0.1px #1a1a1a;transform:scaleX(0.95);transform-origin:0 0;">HK1 HW1 LS++ 21</div>
<div class="t" style="right:978.00px;top:195.93px;font-size:7.6px;color:#1a1a1a;-webkit-text-stroke:0.05px #1a1a1a;">2</div>
<div class="t" style="right:964.80px;top:195.93px;font-size:7.6px;color:#1a1a1a;-webkit-text-stroke:0.05px #1a1a1a;">3</div>
<div class="t" style="left:318.60px;top:196.18px;font-size:5.9px;color:#1a1a1a;-webkit-text-stroke:0.1px #1a1a1a;transform:scaleX(0.95);transform-origin:0 0;">HK1 HW1 EU 102</div>
<div class="t" style="left:441.60px;top:193.18px;font-size:5.9px;color:#1a1a1a;-webkit-text-stroke:0.1px #1a1a1a;transform:scaleX(0.96);transform-origin:0 0;">Mix media</div>
<div class="t" style="left:286.25px;width:600px;text-align:center;top:196.31px;font-size:6.2px;color:#1a1a1a;-webkit-text-stroke:0.1px #1a1a1a;">2</div>
<div class="t" style="left:305.45px;width:600px;text-align:center;top:196.31px;font-size:6.2px;color:#1a1a1a;-webkit-text-stroke:0.1px #1a1a1a;">1</div>
<div class="t" style="right:595.40px;top:196.28px;font-size:6.8px;color:#1a1a1a;-webkit-text-stroke:0.05px #1a1a1a;">5.5</div>
<div class="t" style="right:558.20px;top:196.28px;font-size:6.8px;color:#1a1a1a;-webkit-text-stroke:0.05px #1a1a1a;">9.0</div>
<div class="t" style="right:520.80px;top:196.28px;font-size:6.8px;color:#1a1a1a;-webkit-text-stroke:0.05px #1a1a1a;">4.5</div>
<div class="t" style="right:456.60px;top:196.28px;font-size:6.8px;color:#1a1a1a;-webkit-text-stroke:0.05px #1a1a1a;">0.6</div>
<div class="t" style="right:404.00px;top:196.28px;font-size:6.8px;color:#1a1a1a;-webkit-text-stroke:0.05px #1a1a1a;">3650.00</div>
<div class="t" style="right:978.00px;top:211.02px;font-size:7.6px;color:#1a1a1a;-webkit-text-stroke:0.05px #1a1a1a;">3</div>
<div class="t" style="right:964.80px;top:211.02px;font-size:7.6px;color:#1a1a1a;-webkit-text-stroke:0.05px #1a1a1a;">3</div>
<div class="t" style="left:318.60px;top:211.27px;font-size:5.9px;color:#1a1a1a;-webkit-text-stroke:0.1px #1a1a1a;transform:scaleX(0.95);transform-origin:0 0;">HK1 HW1 FC 1</div>
<div class="t" style="left:441.60px;top:208.27px;font-size:5.9px;color:#1a1a1a;-webkit-text-stroke:0.1px #1a1a1a;transform:scaleX(0.96);transform-origin:0 0;">Flow valve control</div>
<div class="t" style="left:314.85px;width:600px;text-align:center;top:211.40px;font-size:6.2px;color:#1a1a1a;-webkit-text-stroke:0.1px #1a1a1a;">1</div>
<div class="t" style="right:595.40px;top:211.37px;font-size:6.8px;color:#1a1a1a;-webkit-text-stroke:0.05px #1a1a1a;">1.2</div>
<div class="t" style="right:558.20px;top:211.37px;font-size:6.8px;color:#1a1a1a;-webkit-text-stroke:0.05px #1a1a1a;">3.0</div>
<div class="t" style="right:520.80px;top:211.37px;font-size:6.8px;color:#1a1a1a;-webkit-text-stroke:0.05px #1a1a1a;">0.3</div>
<div class="t" style="right:456.60px;top:211.37px;font-size:6.8px;color:#1a1a1a;-webkit-text-stroke:0.05px #1a1a1a;">0.0</div>
<div class="t" style="right:404.00px;top:211.37px;font-size:6.8px;color:#1a1a1a;-webkit-text-stroke:0.05px #1a1a1a;">650.00</div>
<div class="t" style="right:978.00px;top:226.10px;font-size:7.6px;color:#1a1a1a;-webkit-text-stroke:0.05px #1a1a1a;">4</div>
<div class="t" style="right:964.80px;top:226.10px;font-size:7.6px;color:#1a1a1a;-webkit-text-stroke:0.05px #1a1a1a;">3</div>
<div class="t" style="left:318.60px;top:226.36px;font-size:5.9px;color:#1a1a1a;-webkit-text-stroke:0.1px #1a1a1a;transform:scaleX(0.95);transform-origin:0 0;">HK1 HW1 FIRC 2</div>
<div class="t" style="left:441.60px;top:223.36px;font-size:5.9px;color:#1a1a1a;-webkit-text-stroke:0.1px #1a1a1a;transform:scaleX(0.96);transform-origin:0 0;">Flow valve control: Open and closed</div>
<div class="t" style="left:295.95px;width:600px;text-align:center;top:226.49px;font-size:6.2px;color:#1a1a1a;-webkit-text-stroke:0.1px #1a1a1a;">1</div>
<div class="t" style="left:305.45px;width:600px;text-align:center;top:226.49px;font-size:6.2px;color:#1a1a1a;-webkit-text-stroke:0.1px #1a1a1a;">2</div>
<div class="t" style="right:595.40px;top:226.45px;font-size:6.8px;color:#1a1a1a;-webkit-text-stroke:0.05px #1a1a1a;">3.2</div>
<div class="t" style="right:558.20px;top:226.45px;font-size:6.8px;color:#1a1a1a;-webkit-text-stroke:0.05px #1a1a1a;">7.0</div>
<div class="t" style="right:520.80px;top:226.45px;font-size:6.8px;color:#1a1a1a;-webkit-text-stroke:0.05px #1a1a1a;">0.3</div>
<div class="t" style="right:456.60px;top:226.45px;font-size:6.8px;color:#1a1a1a;-webkit-text-stroke:0.05px #1a1a1a;">0.0</div>
<div class="t" style="right:404.00px;top:226.45px;font-size:6.8px;color:#1a1a1a;-webkit-text-stroke:0.05px #1a1a1a;">950.00</div>
<div class="t" style="right:978.00px;top:241.19px;font-size:7.6px;color:#1a1a1a;-webkit-text-stroke:0.05px #1a1a1a;">5</div>
<div class="t" style="right:964.80px;top:241.19px;font-size:7.6px;color:#1a1a1a;-webkit-text-stroke:0.05px #1a1a1a;">3</div>
<div class="t" style="left:318.60px;top:241.44px;font-size:5.9px;color:#1a1a1a;-webkit-text-stroke:0.1px #1a1a1a;transform:scaleX(0.95);transform-origin:0 0;">HK1 HW1 FIRC 3</div>
<div class="t" style="left:441.60px;top:238.44px;font-size:5.9px;color:#1a1a1a;-webkit-text-stroke:0.1px #1a1a1a;transform:scaleX(0.96);transform-origin:0 0;">Flow valve control: Closed</div>
<div class="t" style="left:295.95px;width:600px;text-align:center;top:241.58px;font-size:6.2px;color:#1a1a1a;-webkit-text-stroke:0.1px #1a1a1a;">1</div>
<div class="t" style="left:305.45px;width:600px;text-align:center;top:241.58px;font-size:6.2px;color:#1a1a1a;-webkit-text-stroke:0.1px #1a1a1a;">1</div>
<div class="t" style="right:595.40px;top:241.54px;font-size:6.8px;color:#1a1a1a;-webkit-text-stroke:0.05px #1a1a1a;">2.2</div>
<div class="t" style="right:558.20px;top:241.54px;font-size:6.8px;color:#1a1a1a;-webkit-text-stroke:0.05px #1a1a1a;">5.0</div>
<div class="t" style="right:520.80px;top:241.54px;font-size:6.8px;color:#1a1a1a;-webkit-text-stroke:0.05px #1a1a1a;">0.3</div>
<div class="t" style="right:456.60px;top:241.54px;font-size:6.8px;color:#1a1a1a;-webkit-text-stroke:0.05px #1a1a1a;">0.0</div>
<div class="t" style="right:404.00px;top:241.54px;font-size:6.8px;color:#1a1a1a;-webkit-text-stroke:0.05px #1a1a1a;">800.00</div>
<div class="t" style="right:978.00px;top:256.28px;font-size:7.6px;color:#1a1a1a;-webkit-text-stroke:0.05px #1a1a1a;">6</div>
<div class="t" style="right:964.80px;top:256.28px;font-size:7.6px;color:#1a1a1a;-webkit-text-stroke:0.05px #1a1a1a;">3</div>
<div class="t" style="left:318.60px;top:256.53px;font-size:5.9px;color:#1a1a1a;-webkit-text-stroke:0.1px #1a1a1a;transform:scaleX(0.95);transform-origin:0 0;">HK1 HW1 GS 1</div>
<div class="t" style="left:441.60px;top:253.53px;font-size:5.9px;color:#1a1a1a;-webkit-text-stroke:0.1px #1a1a1a;transform:scaleX(0.96);transform-origin:0 0;">Light barrier</div>
<div class="t" style="left:286.25px;width:600px;text-align:center;top:256.66px;font-size:6.2px;color:#1a1a1a;-webkit-text-stroke:0.1px #1a1a1a;">3</div>
<div class="t" style="left:305.45px;width:600px;text-align:center;top:256.66px;font-size:6.2px;color:#1a1a1a;-webkit-text-stroke:0.1px #1a1a1a;">2</div>
<div class="t" style="right:595.40px;top:256.63px;font-size:6.8px;color:#1a1a1a;-webkit-text-stroke:0.05px #1a1a1a;">1.2</div>
<div class="t" style="right:558.20px;top:256.63px;font-size:6.8px;color:#1a1a1a;-webkit-text-stroke:0.05px #1a1a1a;">3.0</div>
<div class="t" style="right:520.80px;top:256.63px;font-size:6.8px;color:#1a1a1a;-webkit-text-stroke:0.05px #1a1a1a;">0.3</div>
<div class="t" style="right:456.60px;top:256.63px;font-size:6.8px;color:#1a1a1a;-webkit-text-stroke:0.05px #1a1a1a;">0.0</div>
<div class="t" style="right:404.00px;top:256.63px;font-size:6.8px;color:#1a1a1a;-webkit-text-stroke:0.05px #1a1a1a;">650.00</div>
<div class="t" style="right:978.00px;top:271.37px;font-size:7.6px;color:#1a1a1a;-webkit-text-stroke:0.05px #1a1a1a;">7</div>
<div class="t" style="right:964.80px;top:271.37px;font-size:7.6px;color:#1a1a1a;-webkit-text-stroke:0.05px #1a1a1a;">3</div>
<div class="t" style="left:318.60px;top:271.62px;font-size:5.9px;color:#1a1a1a;-webkit-text-stroke:0.1px #1a1a1a;transform:scaleX(0.95);transform-origin:0 0;">HK1 HW1 LIR 20</div>
<div class="t" style="left:441.60px;top:268.62px;font-size:5.9px;color:#1a1a1a;-webkit-text-stroke:0.1px #1a1a1a;transform:scaleX(0.96);transform-origin:0 0;">Measure filling level</div>
<div class="t" style="left:286.25px;width:600px;text-align:center;top:271.75px;font-size:6.2px;color:#1a1a1a;-webkit-text-stroke:0.1px #1a1a1a;">3</div>
<div class="t" style="left:305.45px;width:600px;text-align:center;top:271.75px;font-size:6.2px;color:#1a1a1a;-webkit-text-stroke:0.1px #1a1a1a;">2</div>
<div class="t" style="right:595.40px;top:271.71px;font-size:6.8px;color:#1a1a1a;-webkit-text-stroke:0.05px #1a1a1a;">1.7</div>
<div class="t" style="right:558.20px;top:271.71px;font-size:6.8px;color:#1a1a1a;-webkit-text-stroke:0.05px #1a1a1a;">4.5</div>
<div class="t" style="right:520.80px;top:271.71px;font-size:6.8px;color:#1a1a1a;-webkit-text-stroke:0.05px #1a1a1a;">0.8</div>
<div class="t" style="right:456.60px;top:271.71px;font-size:6.8px;color:#1a1a1a;-webkit-text-stroke:0.05px #1a1a1a;">0.0</div>
<div class="t" style="right:404.00px;top:271.71px;font-size:6.8px;color:#1a1a1a;-webkit-text-stroke:0.05px #1a1a1a;">1450.00</div>
<div class="t" style="right:978.00px;top:286.45px;font-size:7.6px;color:#1a1a1a;-webkit-text-stroke:0.05px #1a1a1a;">8</div>
<div class="t" style="right:964.80px;top:286.45px;font-size:7.6px;color:#1a1a1a;-webkit-text-stroke:0.05px #1a1a1a;">3</div>
<div class="t" style="left:318.60px;top:286.70px;font-size:5.9px;color:#1a1a1a;-webkit-text-stroke:0.1px #1a1a1a;transform:scaleX(0.95);transform-origin:0 0;">HK1 HW1 LS++ 21</div>
<div class="t" style="left:441.60px;top:283.70px;font-size:5.9px;color:#1a1a1a;-webkit-text-stroke:0.1px #1a1a1a;transform:scaleX(0.96);transform-origin:0 0;">Switch off medium feed</div>
<div class="t" style="left:286.25px;width:600px;text-align:center;top:286.84px;font-size:6.2px;color:#1a1a1a;-webkit-text-stroke:0.1px #1a1a1a;">3</div>
<div class="t" style="left:305.45px;width:600px;text-align:center;top:286.84px;font-size:6.2px;color:#1a1a1a;-webkit-text-stroke:0.1px #1a1a1a;">2</div>
<div class="t" style="right:595.40px;top:286.80px;font-size:6.8px;color:#1a1a1a;-webkit-text-stroke:0.05px #1a1a1a;">1.7</div>
<div class="t" style="right:558.20px;top:286.80px;font-size:6.8px;color:#1a1a1a;-webkit-text-stroke:0.05px #1a1a1a;">5.0</div>
<div class="t" style="right:520.80px;top:286.80px;font-size:6.8px;color:#1a1a1a;-webkit-text-stroke:0.05px #1a1a1a;">0.8</div>
<div class="t" style="right:456.60px;top:286.80px;font-size:6.8px;color:#1a1a1a;-webkit-text-stroke:0.05px #1a1a1a;">0.0</div>
<div class="t" style="right:404.00px;top:286.80px;font-size:6.8px;color:#1a1a1a;-webkit-text-stroke:0.05px #1a1a1a;">1450.00</div>
<div class="t" style="left:965.00px;top:286.10px;font-size:5.9px;color:#1a1a1a;-webkit-text-stroke:0.1px #1a1a1a;transform:scaleX(0.95);transform-origin:0 0;">HK1 HW1 EU 101</div>
<div class="t" style="right:978.00px;top:301.54px;font-size:7.6px;color:#1a1a1a;-webkit-text-stroke:0.05px #1a1a1a;">9</div>
<div class="t" style="right:964.80px;top:301.54px;font-size:7.6px;color:#1a1a1a;-webkit-text-stroke:0.05px #1a1a1a;">3</div>
<div class="t" style="left:318.60px;top:301.79px;font-size:5.9px;color:#1a1a1a;-webkit-text-stroke:0.1px #1a1a1a;transform:scaleX(0.95);transform-origin:0 0;">HK1 HW1 LIR 22</div>
<div class="t" style="left:441.60px;top:298.79px;font-size:5.9px;color:#1a1a1a;-webkit-text-stroke:0.1px #1a1a1a;transform:scaleX(0.96);transform-origin:0 0;">Measure filling level</div>
<div class="t" style="left:286.25px;width:600px;text-align:center;top:301.92px;font-size:6.2px;color:#1a1a1a;-webkit-text-stroke:0.1px #1a1a1a;">3</div>
<div class="t" style="left:305.45px;width:600px;text-align:center;top:301.92px;font-size:6.2px;color:#1a1a1a;-webkit-text-stroke:0.1px #1a1a1a;">2</div>
<div class="t" style="right:595.40px;top:301.89px;font-size:6.8px;color:#1a1a1a;-webkit-text-stroke:0.05px #1a1a1a;">0.5</div>
<div class="t" style="right:558.20px;top:301.89px;font-size:6.8px;color:#1a1a1a;-webkit-text-stroke:0.05px #1a1a1a;">1.5</div>
<div class="t" style="right:520.80px;top:301.89px;font-size:6.8px;color:#1a1a1a;-webkit-text-stroke:0.05px #1a1a1a;">0.5</div>
<div class="t" style="right:456.60px;top:301.89px;font-size:6.8px;color:#1a1a1a;-webkit-text-stroke:0.05px #1a1a1a;">0.0</div>
<div class="t" style="right:404.00px;top:301.89px;font-size:6.8px;color:#1a1a1a;-webkit-text-stroke:0.05px #1a1a1a;">800.00</div>
<div class="t" style="right:978.00px;top:316.63px;font-size:7.6px;color:#1a1a1a;-webkit-text-stroke:0.05px #1a1a1a;">10</div>
<div class="t" style="right:964.80px;top:316.63px;font-size:7.6px;color:#1a1a1a;-webkit-text-stroke:0.05px #1a1a1a;">3</div>
<div class="t" style="left:318.60px;top:316.88px;font-size:5.9px;color:#1a1a1a;-webkit-text-stroke:0.1px #1a1a1a;transform:scaleX(0.95);transform-origin:0 0;">HK1 HW1 TIRCA+S++Z+++ 22</div>
<div class="t" style="left:441.60px;top:313.88px;font-size:5.9px;color:#1a1a1a;-webkit-text-stroke:0.1px #1a1a1a;transform:scaleX(0.96);transform-origin:0 0;">Measure temperature</div>
<div class="t" style="left:314.85px;width:600px;text-align:center;top:317.01px;font-size:6.2px;color:#1a1a1a;-webkit-text-stroke:0.1px #1a1a1a;">1</div>
<div class="t" style="right:595.40px;top:316.97px;font-size:6.8px;color:#1a1a1a;-webkit-text-stroke:0.05px #1a1a1a;">1.7</div>
<div class="t" style="right:558.20px;top:316.97px;font-size:6.8px;color:#1a1a1a;-webkit-text-stroke:0.05px #1a1a1a;">4.5</div>
<div class="t" style="right:520.80px;top:316.97px;font-size:6.8px;color:#1a1a1a;-webkit-text-stroke:0.05px #1a1a1a;">0.8</div>
<div class="t" style="right:456.60px;top:316.97px;font-size:6.8px;color:#1a1a1a;-webkit-text-stroke:0.05px #1a1a1a;">0.0</div>
<div class="t" style="right:404.00px;top:316.97px;font-size:6.8px;color:#1a1a1a;-webkit-text-stroke:0.05px #1a1a1a;">1750.00</div>
<div class="t" style="right:978.00px;top:331.71px;font-size:7.6px;color:#1a1a1a;-webkit-text-stroke:0.05px #1a1a1a;">11</div>
<div class="t" style="right:964.80px;top:331.71px;font-size:7.6px;color:#1a1a1a;-webkit-text-stroke:0.05px #1a1a1a;">3</div>
<div class="t" style="left:318.60px;top:331.97px;font-size:5.9px;color:#1a1a1a;-webkit-text-stroke:0.1px #1a1a1a;transform:scaleX(0.95);transform-origin:0 0;">HK1 HW2 EU 101</div>
<div class="t" style="left:441.60px;top:328.97px;font-size:5.9px;color:#1a1a1a;-webkit-text-stroke:0.1px #1a1a1a;transform:scaleX(0.96);transform-origin:0 0;">Feed medium</div>
<div class="t" style="left:286.25px;width:600px;text-align:center;top:332.10px;font-size:6.2px;color:#1a1a1a;-webkit-text-stroke:0.1px #1a1a1a;">2</div>
<div class="t" style="left:305.45px;width:600px;text-align:center;top:332.10px;font-size:6.2px;color:#1a1a1a;-webkit-text-stroke:0.1px #1a1a1a;">1</div>
<div class="t" style="right:595.40px;top:332.06px;font-size:6.8px;color:#1a1a1a;-webkit-text-stroke:0.05px #1a1a1a;">5.5</div>
<div class="t" style="right:558.20px;top:332.06px;font-size:6.8px;color:#1a1a1a;-webkit-text-stroke:0.05px #1a1a1a;">8.0</div>
<div class="t" style="right:520.80px;top:332.06px;font-size:6.8px;color:#1a1a1a;-webkit-text-stroke:0.05px #1a1a1a;">4.5</div>
<div class="t" style="right:456.60px;top:332.06px;font-size:6.8px;color:#1a1a1a;-webkit-text-stroke:0.05px #1a1a1a;">0.6</div>
<div class="t" style="right:404.00px;top:332.06px;font-size:6.8px;color:#1a1a1a;-webkit-text-stroke:0.05px #1a1a1a;">3650.00</div>
<div class="t" style="left:881.90px;top:331.37px;font-size:5.9px;color:#1a1a1a;-webkit-text-stroke:0.1px #1a1a1a;transform:scaleX(0.95);transform-origin:0 0;">HK1 HW2 LS++ 21</div>
<div class="t" style="right:978.00px;top:346.80px;font-size:7.6px;color:#1a1a1a;-webkit-text-stroke:0.05px #1a1a1a;">12</div>
<div class="t" style="right:964.80px;top:346.80px;font-size:7.6px;color:#1a1a1a;-webkit-text-stroke:0.05px #1a1a1a;">3</div>
<div class="t" style="left:318.60px;top:347.05px;font-size:5.9px;color:#1a1a1a;-webkit-text-stroke:0.1px #1a1a1a;transform:scaleX(0.95);transform-origin:0 0;">HK1 HW2 EU 102</div>
<div class="t" style="left:441.60px;top:344.05px;font-size:5.9px;color:#1a1a1a;-webkit-text-stroke:0.1px #1a1a1a;transform:scaleX(0.96);transform-origin:0 0;">Mix media</div>
<div class="t" style="left:286.25px;width:600px;text-align:center;top:347.19px;font-size:6.2px;color:#1a1a1a;-webkit-text-stroke:0.1px #1a1a1a;">2</div>
<div class="t" style="left:305.45px;width:600px;text-align:center;top:347.19px;font-size:6.2px;color:#1a1a1a;-webkit-text-stroke:0.1px #1a1a1a;">1</div>
<div class="t" style="right:595.40px;top:347.15px;font-size:6.8px;color:#1a1a1a;-webkit-text-stroke:0.05px #1a1a1a;">5.5</div>
<div class="t" style="right:558.20px;top:347.15px;font-size:6.8px;color:#1a1a1a;-webkit-text-stroke:0.05px #1a1a1a;">9.0</div>
<div class="t" style="right:520.80px;top:347.15px;font-size:6.8px;color:#1a1a1a;-webkit-text-stroke:0.05px #1a1a1a;">4.5</div>
<div class="t" style="right:456.60px;top:347.15px;font-size:6.8px;color:#1a1a1a;-webkit-text-stroke:0.05px #1a1a1a;">1.5</div>
<div class="t" style="right:404.00px;top:347.15px;font-size:6.8px;color:#1a1a1a;-webkit-text-stroke:0.05px #1a1a1a;">3650.00</div>
<div class="t" style="right:978.00px;top:361.89px;font-size:7.6px;color:#1a1a1a;-webkit-text-stroke:0.05px #1a1a1a;">13</div>
<div class="t" style="right:964.80px;top:361.89px;font-size:7.6px;color:#1a1a1a;-webkit-text-stroke:0.05px #1a1a1a;">3</div>
<div class="t" style="left:318.60px;top:362.14px;font-size:5.9px;color:#1a1a1a;-webkit-text-stroke:0.1px #1a1a1a;transform:scaleX(0.95);transform-origin:0 0;">HK1 HW2 EU 103</div>
<div class="t" style="left:441.60px;top:359.14px;font-size:5.9px;color:#1a1a1a;-webkit-text-stroke:0.1px #1a1a1a;transform:scaleX(0.96);transform-origin:0 0;">Feed medium</div>
<div class="t" style="left:286.25px;width:600px;text-align:center;top:362.27px;font-size:6.2px;color:#1a1a1a;-webkit-text-stroke:0.1px #1a1a1a;">2</div>
<div class="t" style="left:305.45px;width:600px;text-align:center;top:362.27px;font-size:6.2px;color:#1a1a1a;-webkit-text-stroke:0.1px #1a1a1a;">1</div>
<div class="t" style="right:595.40px;top:362.24px;font-size:6.8px;color:#1a1a1a;-webkit-text-stroke:0.05px #1a1a1a;">5.5</div>
<div class="t" style="right:558.20px;top:362.24px;font-size:6.8px;color:#1a1a1a;-webkit-text-stroke:0.05px #1a1a1a;">7.0</div>
<div class="t" style="right:520.80px;top:362.24px;font-size:6.8px;color:#1a1a1a;-webkit-text-stroke:0.05px #1a1a1a;">4.5</div>
<div class="t" style="right:456.60px;top:362.24px;font-size:6.8px;color:#1a1a1a;-webkit-text-stroke:0.05px #1a1a1a;">1.5</div>
<div class="t" style="right:404.00px;top:362.24px;font-size:6.8px;color:#1a1a1a;-webkit-text-stroke:0.05px #1a1a1a;">3650.00</div>
<div class="t" style="left:881.90px;top:361.54px;font-size:5.9px;color:#1a1a1a;-webkit-text-stroke:0.1px #1a1a1a;transform:scaleX(0.95);transform-origin:0 0;">HK1 HW2 LS++ 21</div>
<div class="t" style="right:978.00px;top:376.98px;font-size:7.6px;color:#1a1a1a;-webkit-text-stroke:0.05px #1a1a1a;">14</div>
<div class="t" style="right:964.80px;top:376.98px;font-size:7.6px;color:#1a1a1a;-webkit-text-stroke:0.05px #1a1a1a;">3</div>
<div class="t" style="left:318.60px;top:377.23px;font-size:5.9px;color:#1a1a1a;-webkit-text-stroke:0.1px #1a1a1a;transform:scaleX(0.95);transform-origin:0 0;">HK1 HW2 FC 1</div>
<div class="t" style="left:441.60px;top:374.23px;font-size:5.9px;color:#1a1a1a;-webkit-text-stroke:0.1px #1a1a1a;transform:scaleX(0.96);transform-origin:0 0;">Flow valve control</div>
<div class="t" style="left:314.85px;width:600px;text-align:center;top:377.36px;font-size:6.2px;color:#1a1a1a;-webkit-text-stroke:0.1px #1a1a1a;">1</div>
<div class="t" style="right:595.40px;top:377.32px;font-size:6.8px;color:#1a1a1a;-webkit-text-stroke:0.05px #1a1a1a;">1.2</div>
<div class="t" style="right:558.20px;top:377.32px;font-size:6.8px;color:#1a1a1a;-webkit-text-stroke:0.05px #1a1a1a;">3.0</div>
<div class="t" style="right:520.80px;top:377.32px;font-size:6.8px;color:#1a1a1a;-webkit-text-stroke:0.05px #1a1a1a;">0.3</div>
<div class="t" style="right:456.60px;top:377.32px;font-size:6.8px;color:#1a1a1a;-webkit-text-stroke:0.05px #1a1a1a;">0.0</div>
<div class="t" style="right:404.00px;top:377.32px;font-size:6.8px;color:#1a1a1a;-webkit-text-stroke:0.05px #1a1a1a;">650.00</div>
<div class="t" style="right:978.00px;top:392.06px;font-size:7.6px;color:#1a1a1a;-webkit-text-stroke:0.05px #1a1a1a;">15</div>
<div class="t" style="right:964.80px;top:392.06px;font-size:7.6px;color:#1a1a1a;-webkit-text-stroke:0.05px #1a1a1a;">3</div>
<div class="t" style="left:318.60px;top:392.31px;font-size:5.9px;color:#1a1a1a;-webkit-text-stroke:0.1px #1a1a1a;transform:scaleX(0.95);transform-origin:0 0;">HK1 HW2 FIRC 2</div>
<div class="t" style="left:441.60px;top:389.31px;font-size:5.9px;color:#1a1a1a;-webkit-text-stroke:0.1px #1a1a1a;transform:scaleX(0.96);transform-origin:0 0;">Flow valve control: Open and closed</div>
<div class="t" style="left:295.95px;width:600px;text-align:center;top:392.45px;font-size:6.2px;color:#1a1a1a;-webkit-text-stroke:0.1px #1a1a1a;">1</div>
<div class="t" style="left:305.45px;width:600px;text-align:center;top:392.45px;font-size:6.2px;color:#1a1a1a;-webkit-text-stroke:0.1px #1a1a1a;">2</div>
<div class="t" style="right:595.40px;top:392.41px;font-size:6.8px;color:#1a1a1a;-webkit-text-stroke:0.05px #1a1a1a;">3.2</div>
<div class="t" style="right:558.20px;top:392.41px;font-size:6.8px;color:#1a1a1a;-webkit-text-stroke:0.05px #1a1a1a;">7.0</div>
<div class="t" style="right:520.80px;top:392.41px;font-size:6.8px;color:#1a1a1a;-webkit-text-stroke:0.05px #1a1a1a;">0.3</div>
<div class="t" style="right:456.60px;top:392.41px;font-size:6.8px;color:#1a1a1a;-webkit-text-stroke:0.05px #1a1a1a;">0.0</div>
<div class="t" style="right:404.00px;top:392.41px;font-size:6.8px;color:#1a1a1a;-webkit-text-stroke:0.05px #1a1a1a;">950.00</div>
<div class="t" style="right:978.00px;top:407.15px;font-size:7.6px;color:#1a1a1a;-webkit-text-stroke:0.05px #1a1a1a;">16</div>
<div class="t" style="right:964.80px;top:407.15px;font-size:7.6px;color:#1a1a1a;-webkit-text-stroke:0.05px #1a1a1a;">3</div>
<div class="t" style="left:318.60px;top:407.40px;font-size:5.9px;color:#1a1a1a;-webkit-text-stroke:0.1px #1a1a1a;transform:scaleX(0.95);transform-origin:0 0;">HK1 HW2 FC 3</div>
<div class="t" style="left:441.60px;top:404.40px;font-size:5.9px;color:#1a1a1a;-webkit-text-stroke:0.1px #1a1a1a;transform:scaleX(0.96);transform-origin:0 0;">Flow valve control</div>
<div class="t" style="left:314.85px;width:600px;text-align:center;top:407.53px;font-size:6.2px;color:#1a1a1a;-webkit-text-stroke:0.1px #1a1a1a;">1</div>
<div class="t" style="right:595.40px;top:407.50px;font-size:6.8px;color:#1a1a1a;-webkit-text-stroke:0.05px #1a1a1a;">1.2</div>
<div class="t" style="right:558.20px;top:407.50px;font-size:6.8px;color:#1a1a1a;-webkit-text-stroke:0.05px #1a1a1a;">3.0</div>
<div class="t" style="right:520.80px;top:407.50px;font-size:6.8px;color:#1a1a1a;-webkit-text-stroke:0.05px #1a1a1a;">0.3</div>
<div class="t" style="right:456.60px;top:407.50px;font-size:6.8px;color:#1a1a1a;-webkit-text-stroke:0.05px #1a1a1a;">0.0</div>
<div class="t" style="right:404.00px;top:407.50px;font-size:6.8px;color:#1a1a1a;-webkit-text-stroke:0.05px #1a1a1a;">650.00</div>
<div class="t" style="right:978.00px;top:422.24px;font-size:7.6px;color:#1a1a1a;-webkit-text-stroke:0.05px #1a1a1a;">17</div>
<div class="t" style="right:964.80px;top:422.24px;font-size:7.6px;color:#1a1a1a;-webkit-text-stroke:0.05px #1a1a1a;">3</div>
<div class="t" style="left:318.60px;top:422.49px;font-size:5.9px;color:#1a1a1a;-webkit-text-stroke:0.1px #1a1a1a;transform:scaleX(0.95);transform-origin:0 0;">HK1 HW2 FIRC 4</div>
<div class="t" style="left:441.60px;top:419.49px;font-size:5.9px;color:#1a1a1a;-webkit-text-stroke:0.1px #1a1a1a;transform:scaleX(0.96);transform-origin:0 0;">Flow valve control: Open and closed</div>
<div class="t" style="left:295.95px;width:600px;text-align:center;top:422.62px;font-size:6.2px;color:#1a1a1a;-webkit-text-stroke:0.1px #1a1a1a;">1</div>
<div class="t" style="left:305.45px;width:600px;text-align:center;top:422.62px;font-size:6.2px;color:#1a1a1a;-webkit-text-stroke:0.1px #1a1a1a;">2</div>
<div class="t" style="right:595.40px;top:422.58px;font-size:6.8px;color:#1a1a1a;-webkit-text-stroke:0.05px #1a1a1a;">3.2</div>
<div class="t" style="right:558.20px;top:422.58px;font-size:6.8px;color:#1a1a1a;-webkit-text-stroke:0.05px #1a1a1a;">7.0</div>
<div class="t" style="right:520.80px;top:422.58px;font-size:6.8px;color:#1a1a1a;-webkit-text-stroke:0.05px #1a1a1a;">0.3</div>
<div class="t" style="right:456.60px;top:422.58px;font-size:6.8px;color:#1a1a1a;-webkit-text-stroke:0.05px #1a1a1a;">0.0</div>
<div class="t" style="right:404.00px;top:422.58px;font-size:6.8px;color:#1a1a1a;-webkit-text-stroke:0.05px #1a1a1a;">950.00</div>
<div class="t" style="right:978.00px;top:437.32px;font-size:7.6px;color:#1a1a1a;-webkit-text-stroke:0.05px #1a1a1a;">18</div>
<div class="t" style="right:964.80px;top:437.32px;font-size:7.6px;color:#1a1a1a;-webkit-text-stroke:0.05px #1a1a1a;">3</div>
<div class="t" style="left:318.60px;top:437.57px;font-size:5.9px;color:#1a1a1a;-webkit-text-stroke:0.1px #1a1a1a;transform:scaleX(0.95);transform-origin:0 0;">HK1 HW2 LIR 20</div>
<div class="t" style="left:441.60px;top:434.57px;font-size:5.9px;color:#1a1a1a;-webkit-text-stroke:0.1px #1a1a1a;transform:scaleX(0.96);transform-origin:0 0;">Measure filling level</div>
<div class="t" style="left:286.25px;width:600px;text-align:center;top:437.71px;font-size:6.2px;color:#1a1a1a;-webkit-text-stroke:0.1px #1a1a1a;">3</div>
<div class="t" style="left:305.45px;width:600px;text-align:center;top:437.71px;font-size:6.2px;color:#1a1a1a;-webkit-text-stroke:0.1px #1a1a1a;">2</div>
<div class="t" style="right:595.40px;top:437.67px;font-size:6.8px;color:#1a1a1a;-webkit-text-stroke:0.05px #1a1a1a;">1.7</div>
<div class="t" style="right:558.20px;top:437.67px;font-size:6.8px;color:#1a1a1a;-webkit-text-stroke:0.05px #1a1a1a;">5.0</div>
<div class="t" style="right:520.80px;top:437.67px;font-size:6.8px;color:#1a1a1a;-webkit-text-stroke:0.05px #1a1a1a;">0.8</div>
<div class="t" style="right:456.60px;top:437.67px;font-size:6.8px;color:#1a1a1a;-webkit-text-stroke:0.05px #1a1a1a;">0.0</div>
<div class="t" style="right:404.00px;top:437.67px;font-size:6.8px;color:#1a1a1a;-webkit-text-stroke:0.05px #1a1a1a;">1450.00</div>
<div class="t" style="right:978.00px;top:452.41px;font-size:7.6px;color:#1a1a1a;-webkit-text-stroke:0.05px #1a1a1a;">19</div>
<div class="t" style="right:964.80px;top:452.41px;font-size:7.6px;color:#1a1a1a;-webkit-text-stroke:0.05px #1a1a1a;">3</div>
<div class="t" style="left:318.60px;top:452.66px;font-size:5.9px;color:#1a1a1a;-webkit-text-stroke:0.1px #1a1a1a;transform:scaleX(0.95);transform-origin:0 0;">HK1 HW2 LS++ 21</div>
<div class="t" style="left:441.60px;top:449.66px;font-size:5.9px;color:#1a1a1a;-webkit-text-stroke:0.1px #1a1a1a;transform:scaleX(0.96);transform-origin:0 0;">Switch off medium feed</div>
<div class="t" style="left:286.25px;width:600px;text-align:center;top:452.79px;font-size:6.2px;color:#1a1a1a;-webkit-text-stroke:0.1px #1a1a1a;">3</div>
<div class="t" style="left:305.45px;width:600px;text-align:center;top:452.79px;font-size:6.2px;color:#1a1a1a;-webkit-text-stroke:0.1px #1a1a1a;">2</div>
<div class="t" style="right:595.40px;top:452.76px;font-size:6.8px;color:#1a1a1a;-webkit-text-stroke:0.05px #1a1a1a;">1.7</div>
<div class="t" style="right:558.20px;top:452.76px;font-size:6.8px;color:#1a1a1a;-webkit-text-stroke:0.05px #1a1a1a;">5.5</div>
<div class="t" style="right:520.80px;top:452.76px;font-size:6.8px;color:#1a1a1a;-webkit-text-stroke:0.05px #1a1a1a;">0.8</div>
<div class="t" style="right:456.60px;top:452.76px;font-size:6.8px;color:#1a1a1a;-webkit-text-stroke:0.05px #1a1a1a;">0.0</div>
<div class="t" style="right:404.00px;top:452.76px;font-size:6.8px;color:#1a1a1a;-webkit-text-stroke:0.05px #1a1a1a;">1450.00</div>
<div class="t" style="left:965.00px;top:449.16px;font-size:5.9px;color:#1a1a1a;-webkit-text-stroke:0.1px #1a1a1a;transform:scaleX(0.95);transform-origin:0 0;">HK1 HW2 EU 101;HK1 HW2 EU</div>
<div class="t" style="left:965.00px;top:455.56px;font-size:5.9px;color:#1a1a1a;-webkit-text-stroke:0.1px #1a1a1a;transform:scaleX(0.95);transform-origin:0 0;">103</div>
<div class="t" style="right:978.00px;top:467.50px;font-size:7.6px;color:#1a1a1a;-webkit-text-stroke:0.05px #1a1a1a;">20</div>
<div class="t" style="right:964.80px;top:467.50px;font-size:7.6px;color:#1a1a1a;-webkit-text-stroke:0.05px #1a1a1a;">3</div>
<div class="t" style="left:318.60px;top:467.75px;font-size:5.9px;color:#1a1a1a;-webkit-text-stroke:0.1px #1a1a1a;transform:scaleX(0.95);transform-origin:0 0;">HK1 HW3 LIR 20</div>
<div class="t" style="left:441.60px;top:464.75px;font-size:5.9px;color:#1a1a1a;-webkit-text-stroke:0.1px #1a1a1a;transform:scaleX(0.96);transform-origin:0 0;">Measure filling level</div>
<div class="t" style="left:286.25px;width:600px;text-align:center;top:467.88px;font-size:6.2px;color:#1a1a1a;-webkit-text-stroke:0.1px #1a1a1a;">3</div>
<div class="t" style="left:305.45px;width:600px;text-align:center;top:467.88px;font-size:6.2px;color:#1a1a1a;-webkit-text-stroke:0.1px #1a1a1a;">2</div>
<div class="t" style="right:595.40px;top:467.84px;font-size:6.8px;color:#1a1a1a;-webkit-text-stroke:0.05px #1a1a1a;">1.7</div>
<div class="t" style="right:558.20px;top:467.84px;font-size:6.8px;color:#1a1a1a;-webkit-text-stroke:0.05px #1a1a1a;">5.5</div>
<div class="t" style="right:520.80px;top:467.84px;font-size:6.8px;color:#1a1a1a;-webkit-text-stroke:0.05px #1a1a1a;">0.8</div>
<div class="t" style="right:456.60px;top:467.84px;font-size:6.8px;color:#1a1a1a;-webkit-text-stroke:0.05px #1a1a1a;">0.0</div>
<div class="t" style="right:404.00px;top:467.84px;font-size:6.8px;color:#1a1a1a;-webkit-text-stroke:0.05px #1a1a1a;">1450.00</div>
<div class="t" style="right:978.00px;top:482.58px;font-size:7.6px;color:#1a1a1a;-webkit-text-stroke:0.05px #1a1a1a;">21</div>
<div class="t" style="right:964.80px;top:482.58px;font-size:7.6px;color:#1a1a1a;-webkit-text-stroke:0.05px #1a1a1a;">3</div>
<div class="t" style="left:318.60px;top:482.84px;font-size:5.9px;color:#1a1a1a;-webkit-text-stroke:0.1px #1a1a1a;transform:scaleX(0.95);transform-origin:0 0;">HK1 HW3 LS++ 21</div>
<div class="t" style="left:441.60px;top:479.84px;font-size:5.9px;color:#1a1a1a;-webkit-text-stroke:0.1px #1a1a1a;transform:scaleX(0.96);transform-origin:0 0;">Switch off medium feed</div>
<div class="t" style="left:286.25px;width:600px;text-align:center;top:482.97px;font-size:6.2px;color:#1a1a1a;-webkit-text-stroke:0.1px #1a1a1a;">3</div>
<div class="t" style="left:305.45px;width:600px;text-align:center;top:482.97px;font-size:6.2px;color:#1a1a1a;-webkit-text-stroke:0.1px #1a1a1a;">2</div>
<div class="t" style="right:595.40px;top:482.93px;font-size:6.8px;color:#1a1a1a;-webkit-text-stroke:0.05px #1a1a1a;">1.7</div>
<div class="t" style="right:558.20px;top:482.93px;font-size:6.8px;color:#1a1a1a;-webkit-text-stroke:0.05px #1a1a1a;">6.5</div>
<div class="t" style="right:520.80px;top:482.93px;font-size:6.8px;color:#1a1a1a;-webkit-text-stroke:0.05px #1a1a1a;">0.8</div>
<div class="t" style="right:456.60px;top:482.93px;font-size:6.8px;color:#1a1a1a;-webkit-text-stroke:0.05px #1a1a1a;">0.0</div>
<div class="t" style="right:404.00px;top:482.93px;font-size:6.8px;color:#1a1a1a;-webkit-text-stroke:0.05px #1a1a1a;">1450.00</div>
<div class="t" style="right:978.00px;top:497.67px;font-size:7.6px;color:#1a1a1a;-webkit-text-stroke:0.05px #1a1a1a;">22</div>
<div class="t" style="right:964.80px;top:497.67px;font-size:7.6px;color:#1a1a1a;-webkit-text-stroke:0.05px #1a1a1a;">3</div>
<div class="t" style="left:318.60px;top:497.92px;font-size:5.9px;color:#1a1a1a;-webkit-text-stroke:0.1px #1a1a1a;transform:scaleX(0.95);transform-origin:0 0;">HK1 HW4 LIR 20</div>
<div class="t" style="left:441.60px;top:494.92px;font-size:5.9px;color:#1a1a1a;-webkit-text-stroke:0.1px #1a1a1a;transform:scaleX(0.96);transform-origin:0 0;">Measure filling level</div>
<div class="t" style="left:286.25px;width:600px;text-align:center;top:498.06px;font-size:6.2px;color:#1a1a1a;-webkit-text-stroke:0.1px #1a1a1a;">3</div>
<div class="t" style="left:305.45px;width:600px;text-align:center;top:498.06px;font-size:6.2px;color:#1a1a1a;-webkit-text-stroke:0.1px #1a1a1a;">2</div>
<div class="t" style="right:595.40px;top:498.02px;font-size:6.8px;color:#1a1a1a;-webkit-text-stroke:0.05px #1a1a1a;">1.7</div>
<div class="t" style="right:558.20px;top:498.02px;font-size:6.8px;color:#1a1a1a;-webkit-text-stroke:0.05px #1a1a1a;">4.5</div>
<div class="t" style="right:520.80px;top:498.02px;font-size:6.8px;color:#1a1a1a;-webkit-text-stroke:0.05px #1a1a1a;">0.8</div>
<div class="t" style="right:456.60px;top:498.02px;font-size:6.8px;color:#1a1a1a;-webkit-text-stroke:0.05px #1a1a1a;">0.0</div>
<div class="t" style="right:404.00px;top:498.02px;font-size:6.8px;color:#1a1a1a;-webkit-text-stroke:0.05px #1a1a1a;">1450.00</div>
<div class="t" style="right:978.00px;top:512.76px;font-size:7.6px;color:#1a1a1a;-webkit-text-stroke:0.05px #1a1a1a;">23</div>
<div class="t" style="right:964.80px;top:512.76px;font-size:7.6px;color:#1a1a1a;-webkit-text-stroke:0.05px #1a1a1a;">3</div>
<div class="t" style="left:318.60px;top:513.01px;font-size:5.9px;color:#1a1a1a;-webkit-text-stroke:0.1px #1a1a1a;transform:scaleX(0.95);transform-origin:0 0;">HK1 HW4 LS++ 21</div>
<div class="t" style="left:441.60px;top:510.01px;font-size:5.9px;color:#1a1a1a;-webkit-text-stroke:0.1px #1a1a1a;transform:scaleX(0.96);transform-origin:0 0;">Switch off medium feed</div>
<div class="t" style="left:286.25px;width:600px;text-align:center;top:513.14px;font-size:6.2px;color:#1a1a1a;-webkit-text-stroke:0.1px #1a1a1a;">3</div>
<div class="t" style="left:305.45px;width:600px;text-align:center;top:513.14px;font-size:6.2px;color:#1a1a1a;-webkit-text-stroke:0.1px #1a1a1a;">2</div>
<div class="t" style="right:595.40px;top:513.11px;font-size:6.8px;color:#1a1a1a;-webkit-text-stroke:0.05px #1a1a1a;">1.7</div>
<div class="t" style="right:558.20px;top:513.11px;font-size:6.8px;color:#1a1a1a;-webkit-text-stroke:0.05px #1a1a1a;">5.0</div>
<div class="t" style="right:520.80px;top:513.11px;font-size:6.8px;color:#1a1a1a;-webkit-text-stroke:0.05px #1a1a1a;">0.8</div>
<div class="t" style="right:456.60px;top:513.11px;font-size:6.8px;color:#1a1a1a;-webkit-text-stroke:0.05px #1a1a1a;">0.0</div>
<div class="t" style="right:404.00px;top:513.11px;font-size:6.8px;color:#1a1a1a;-webkit-text-stroke:0.05px #1a1a1a;">1450.00</div>
<svg style="left:0;top:0" width="1280" height="720">
<line x1="536.3" y1="534.3" x2="889" y2="534.3" stroke="#444" stroke-width="1.0"/>
<line x1="536.3" y1="545.8" x2="889" y2="545.8" stroke="#555" stroke-width="1.0"/>
<line x1="536.3" y1="555.2" x2="889" y2="555.2" stroke="#222" stroke-width="1.5"/>
<line x1="591.3" y1="534.3" x2="591.3" y2="555.2" stroke="#555" stroke-width="0.9"/>
<line x1="600.8" y1="534.3" x2="600.8" y2="555.2" stroke="#555" stroke-width="0.9"/>
<line x1="610.3" y1="534.3" x2="610.3" y2="555.2" stroke="#555" stroke-width="0.9"/>
<line x1="619.8" y1="534.3" x2="619.8" y2="555.2" stroke="#555" stroke-width="0.9"/>
<line x1="649.5" y1="534.3" x2="649.5" y2="555.2" stroke="#555" stroke-width="0.9"/>
<line x1="687.2" y1="534.3" x2="687.2" y2="555.2" stroke="#555" stroke-width="0.9"/>
<line x1="724.9" y1="534.3" x2="724.9" y2="555.2" stroke="#555" stroke-width="0.9"/>
<line x1="762.9" y1="534.3" x2="762.9" y2="555.2" stroke="#555" stroke-width="0.9"/>
<line x1="827.3" y1="534.3" x2="827.3" y2="555.2" stroke="#555" stroke-width="0.9"/>
<line x1="581.5" y1="534.3" x2="581.5" y2="555.2" stroke="#111" stroke-width="1.5"/>
<line x1="628.7" y1="534.3" x2="628.7" y2="555.2" stroke="#111" stroke-width="1.5"/>
</svg>
<div class="t" style="left:286.40px;width:600px;text-align:center;top:530.47px;font-size:3.8px;color:#444;">DO</div>
<div class="t" style="left:296.00px;width:600px;text-align:center;top:530.47px;font-size:3.8px;color:#444;">AO</div>
<div class="t" style="left:305.50px;width:600px;text-align:center;top:530.47px;font-size:3.8px;color:#444;">DI</div>
<div class="t" style="left:315.00px;width:600px;text-align:center;top:530.47px;font-size:3.8px;color:#444;">AI</div>
<div class="t" style="left:324.00px;width:600px;text-align:center;top:530.47px;font-size:3.8px;color:#444;">Σ</div>
<div class="t" style="left:541.20px;top:539.13px;font-size:6.2px;color:#1a1a1a;-webkit-text-stroke:0.1px #1a1a1a;transform:scaleX(0.9392999809816215);transform-origin:0 0;">Carry over:</div>
<div class="t" style="right:709.70px;top:548.03px;font-size:6.2px;color:#1a1a1a;-webkit-text-stroke:0.1px #1a1a1a;transform:scaleX(0.92);transform-origin:100% 0;">Total:</div>
<div class="t" style="left:286.40px;width:600px;text-align:center;top:548.03px;font-size:6.2px;color:#1a1a1a;-webkit-text-stroke:0.1px #1a1a1a;transform:scaleX(0.9);transform-origin:50% 0;">40</div>
<div class="t" style="left:296.00px;width:600px;text-align:center;top:548.03px;font-size:6.2px;color:#1a1a1a;-webkit-text-stroke:0.1px #1a1a1a;transform:scaleX(0.9);transform-origin:50% 0;">4</div>
<div class="t" style="left:305.50px;width:600px;text-align:center;top:548.03px;font-size:6.2px;color:#1a1a1a;-webkit-text-stroke:0.1px #1a1a1a;transform:scaleX(0.9);transform-origin:50% 0;">32</div>
<div class="t" style="left:315.00px;width:600px;text-align:center;top:548.03px;font-size:6.2px;color:#1a1a1a;-webkit-text-stroke:0.1px #1a1a1a;transform:scaleX(0.9);transform-origin:50% 0;">4</div>
<div class="t" style="right:596.10px;top:548.03px;font-size:6.2px;color:#1a1a1a;-webkit-text-stroke:0.1px #1a1a1a;transform:scaleX(0.92);transform-origin:100% 0;">59.9</div>
<div class="t" style="right:558.10px;top:548.03px;font-size:6.2px;color:#1a1a1a;-webkit-text-stroke:0.1px #1a1a1a;transform:scaleX(0.92);transform-origin:100% 0;">126.5</div>
<div class="t" style="right:520.70px;top:548.03px;font-size:6.2px;color:#1a1a1a;-webkit-text-stroke:0.1px #1a1a1a;transform:scaleX(0.92);transform-origin:100% 0;">32.6</div>
<div class="t" style="right:457.10px;top:548.03px;font-size:6.2px;color:#1a1a1a;-webkit-text-stroke:0.1px #1a1a1a;transform:scaleX(0.92);transform-origin:100% 0;">4.8</div>
<div class="t" style="right:403.70px;top:548.03px;font-size:6.2px;color:#1a1a1a;-webkit-text-stroke:0.1px #1a1a1a;transform:scaleX(0.92);transform-origin:100% 0;">38650.00</div>
<svg style="left:0;top:0" width="1280" height="720">
<line x1="268.4" y1="629.2" x2="1060.4" y2="629.2" stroke="#333" stroke-width="1.4"/>
<line x1="268.4" y1="659.2" x2="1060.4" y2="659.2" stroke="#333" stroke-width="1.4"/>
<line x1="268.4" y1="636.8" x2="381.6" y2="636.8" stroke="#333" stroke-width="1.0"/>
<line x1="268.4" y1="644.2" x2="381.6" y2="644.2" stroke="#333" stroke-width="1.0"/>
<line x1="268.4" y1="651.6" x2="622.8" y2="651.6" stroke="#333" stroke-width="1.0"/>
<line x1="736.5" y1="651.6" x2="1060.4" y2="651.6" stroke="#333" stroke-width="1.0"/>
<line x1="381.6" y1="636.8" x2="532.2" y2="636.8" stroke="#333" stroke-width="1.0"/>
<line x1="532.2" y1="641.2" x2="622.8" y2="641.2" stroke="#333" stroke-width="1.0"/>
<line x1="857" y1="637.2" x2="1060.4" y2="637.2" stroke="#333" stroke-width="0.9"/>
<line x1="857" y1="644.4" x2="1060.4" y2="644.4" stroke="#333" stroke-width="0.9"/>
<line x1="268.4" y1="629.2" x2="268.4" y2="659.2" stroke="#333" stroke-width="1.0"/>
<line x1="305.8" y1="629.2" x2="305.8" y2="659.2" stroke="#333" stroke-width="1.0"/>
<line x1="343.6" y1="629.2" x2="343.6" y2="659.2" stroke="#333" stroke-width="1.0"/>
<line x1="381.6" y1="629.2" x2="381.6" y2="659.2" stroke="#333" stroke-width="1.0"/>
<line x1="532.2" y1="629.2" x2="532.2" y2="659.2" stroke="#333" stroke-width="1.0"/>
<line x1="622.8" y1="629.2" x2="622.8" y2="659.2" stroke="#333" stroke-width="1.0"/>
<line x1="736.5" y1="629.2" x2="736.5" y2="659.2" stroke="#333" stroke-width="1.0"/>
<line x1="857" y1="629.2" x2="857" y2="659.2" stroke="#333" stroke-width="1.0"/>
<line x1="924.9" y1="629.2" x2="924.9" y2="659.2" stroke="#333" stroke-width="1.0"/>
<line x1="993.1" y1="629.2" x2="993.1" y2="659.2" stroke="#333" stroke-width="1.0"/>
<line x1="1060.4" y1="629.2" x2="1060.4" y2="659.2" stroke="#333" stroke-width="1.0"/>
<line x1="780.1" y1="651.6" x2="780.1" y2="659.2" stroke="#333" stroke-width="0.9"/>
</svg>
<div class="t" style="left:270.00px;top:654.06px;font-size:4px;color:#1a1a1a;transform:scaleX(0.95);transform-origin:0 0;">Modification</div>
<div class="t" style="left:307.50px;top:654.06px;font-size:4px;color:#1a1a1a;">Date</div>
<div class="t" style="left:345.50px;top:654.06px;font-size:4px;color:#1a1a1a;">Name</div>
<div class="t" style="left:383.00px;top:631.16px;font-size:4px;color:#1a1a1a;">Project name</div>
<div class="t" style="left:418.00px;top:631.16px;font-size:4px;color:#1a1a1a;">ESS_Sample_Project</div>
<div class="t" style="left:383.00px;top:637.60px;font-size:6.6px;color:#222;-webkit-text-stroke:0.05px #222;transform:scaleX(0.95);transform-origin:0 0;">Grinding machine</div>
<div class="t" style="left:383.00px;top:654.06px;font-size:4px;color:#1a1a1a;">Creator</div>
<div class="t" style="left:418.00px;top:654.06px;font-size:4px;color:#1a1a1a;">EPL</div>
<div class="t" style="left:534.00px;top:630.76px;font-size:4px;color:#1a1a1a;">Job number</div>
<div class="t" style="left:534.00px;top:636.36px;font-size:4px;color:#1a1a1a;">001</div>
<div class="t" style="left:534.00px;top:643.06px;font-size:4px;color:#1a1a1a;">Drawing number</div>
<div class="t" style="left:534.00px;top:653.86px;font-size:4px;color:#1a1a1a;">Approved by</div>
<div class="t" style="left:624.50px;top:631.63px;font-size:6.2px;color:#222;-webkit-text-stroke:0.1px #222;transform:scaleX(0.92);transform-origin:0 0;">EPLAN GmbH &amp; Co. KG</div>
<div class="t" style="left:737.50px;top:631.33px;font-size:6.2px;color:#222;-webkit-text-stroke:0.1px #222;transform:scaleX(0.92);transform-origin:0 0;">PCT loop overview</div>
<div class="t" style="left:737.50px;top:654.06px;font-size:4px;color:#1a1a1a;">Date</div>
<div class="t" style="left:758.50px;top:654.06px;font-size:4px;color:#1a1a1a;">10/16/2023</div>
<div class="t" style="left:781.50px;top:654.06px;font-size:4px;color:#1a1a1a;">Ed.</div>
<div class="t" style="right:424.50px;top:654.06px;font-size:4px;color:#1a1a1a;">US84500029</div>
<div class="t" style="left:926.50px;top:631.76px;font-size:4px;color:#1a1a1a;">=HK1</div>
<div class="t" style="left:926.50px;top:639.81px;font-size:3.2px;color:#222;">Paint workpiece</div>
<div class="t" style="left:926.50px;top:646.56px;font-size:4px;color:#1a1a1a;">+</div>
<div class="t" style="left:995.00px;top:631.76px;font-size:4px;color:#1a1a1a;">&amp;PFB</div>
<div class="t" style="left:995.00px;top:639.81px;font-size:3.2px;color:#222;">P&amp;I diagrams</div>
<div class="t" style="left:995.00px;top:646.56px;font-size:4px;color:#1a1a1a;">Page</div>
<div class="t" style="right:222.00px;top:646.56px;font-size:4px;color:#1a1a1a;">3</div>
<div class="t" style="left:995.00px;top:654.06px;font-size:4px;color:#1a1a1a;">Page</div>
<div class="t" style="left:1020.00px;top:654.06px;font-size:4px;color:#1a1a1a;">215</div>
<div class="t" style="left:1030.00px;top:654.06px;font-size:4px;color:#1a1a1a;">from</div>
<div class="t" style="right:222.00px;top:654.06px;font-size:4px;color:#1a1a1a;">272</div>
<svg style="left:710;top:629" width="24" height="30"><rect x="1" y="1" width="20.1" height="14.9" fill="#e0003c"/><path d="M9.2 2.8l-2.6 7.4M12.8 2.8l-4.2 11.5M16.4 2.8l-4.2 11.5" stroke="#fff" stroke-width="1.7" stroke-linecap="round"/><circle cx="4.3" cy="20.5" r="3.3" fill="#e0003c"/><path d="M2.3 20.3h4.2" stroke="#fff" stroke-width="0.9"/><path d="M5.3 22.3h2" stroke="#fff" stroke-width="0.9"/><text x="8" y="22.6" font-family="Liberation Sans" font-size="5.6" font-weight="bold" fill="#222" textLength="13" lengthAdjust="spacingAndGlyphs">PLAN</text><path d="M8 23.3h13" stroke="#555" stroke-width="0.5"/><rect x="1" y="25.2" width="9" height="3.6" fill="#00964b"/><rect x="10" y="25.2" width="2.6" height="3.6" fill="#0a7fd0"/><rect x="12.6" y="25.2" width="2.5" height="3.6" fill="#1d58b0"/><rect x="15.1" y="25.2" width="2.5" height="3.6" fill="#9a2a9a"/><rect x="17.6" y="25.2" width="3.5" height="3.6" fill="#e0103a"/></svg>
<div class="r" style="left:266.00px;top:695.00px;width:796.00px;height:12.50px;background:#484848;"></div>
<div class="r" style="left:266.00px;top:707.50px;width:796.00px;height:1.00px;background:#383838;"></div>
<div class="t" style="left:272.00px;top:697.38px;font-size:7px;color:#dcdcdc;-webkit-text-stroke:0.12px #dcdcdc;transform:scaleX(0.8127887225564745);transform-origin:0 0;">X: 496.08 mm Y: 290.76 mm</div>
<div class="r" style="left:1063.00px;top:95.00px;width:217.00px;height:600.00px;background:#262626;"></div>
<div class="r" style="left:1065.50px;top:96.50px;width:214.50px;height:461.50px;background:#303030;"></div>
<div class="r" style="left:1065.50px;top:561.00px;width:214.50px;height:3.00px;background:#3f3f3f;"></div>
<div class="r" style="left:1064.50px;top:96.50px;width:1.00px;height:598.50px;background:#383838;"></div>
<div class="t" style="left:1067.30px;top:99.58px;font-size:7px;color:#1e9be8;font-weight:bold;-webkit-text-stroke:0.05px #1e9be8;transform:scaleX(0.7795228066138156);transform-origin:0 0;">Insert center (IEC)</div>
<svg style="left:1259;top:99" width="21" height="10" fill="#ddd"><path d="M1.5 3h5l-2.5 3z"/><path d="M11.7 1.2h2.6v3.6h-2.6z" fill="none" stroke="#ddd" stroke-width="0.9"/><path d="M10.8 4.9h4.4" stroke="#ddd" stroke-width="1"/><path d="M13 4.9v2.4" stroke="#ddd" stroke-width="0.9"/></svg>
<div class="r" style="left:1064.90px;top:110.50px;width:13.00px;height:11.30px;background:#444;box-sizing:border-box;border:1px solid #5a5a5a;"></div>
<svg style="left:1066;top:111" width="12" height="10" fill="none" stroke="#ddd" stroke-width="0.8"><rect x="1.5" y="1.5" width="7" height="7"/><path d="M3.5 1.5v7"/><circle cx="8" cy="6.5" r="1.5" stroke="#2a9de8" stroke-width="1"/></svg>
<div class="r" style="left:1078.50px;top:110.50px;width:186.00px;height:11.30px;background:#262626;box-sizing:border-box;border:1px solid #3e3e3e;"></div>
<div class="t" style="left:1082.50px;top:112.28px;font-size:7px;color:#8a8a8a;transform:scaleX(0.85);transform-origin:0 0;">Find</div>
<svg style="left:1252;top:111" width="10" height="10" fill="none" stroke="#2a8ad8" stroke-width="1"><circle cx="6" cy="4" r="2.8"/><path d="M4 6l-3 3"/></svg>
<div class="r" style="left:1266.70px;top:110.50px;width:13.30px;height:11.30px;background:#2e2e2e;box-sizing:border-box;border:1px solid #3c3c3c;"></div>
<svg style="left:1269;top:115.5" width="9" height="4"><path d="M1.5 2h5.5" stroke="#bbb" stroke-width="0.8" stroke-dasharray="1 0.7"/></svg>
<div class="r" style="left:1064.00px;top:123.50px;width:216.00px;height:2.50px;background:#262626;"></div>
<div class="r" style="left:1065.50px;top:127.30px;width:12.50px;height:11.80px;background:#2e2e2e;box-sizing:border-box;border:1px solid #3c3c3c;"></div>
<div class="r" style="left:1079.50px;top:127.30px;width:13.00px;height:11.80px;background:#2e2e2e;box-sizing:border-box;border:1px solid #3c3c3c;"></div>
<div class="r" style="left:1093.30px;top:127.30px;width:185.40px;height:11.80px;background:#2e2e2e;box-sizing:border-box;border:1px solid #3c3c3c;"></div>
<svg style="left:1065;top:127" width="30" height="12" fill="none" stroke="#bbb" stroke-width="0.8"><path d="M3.5 6l3-3 3 3v3.5h-6z"/><path d="M18 6h5M18 6l2-2M18 6l2 2"/></svg>
<div class="t" style="left:1096.70px;top:129.47px;font-size:7.2px;color:#f4f4f4;font-weight:bold;transform:scaleX(0.8748266749650225);transform-origin:0 0;">Home</div>
<svg style="left:1117;top:130" width="6" height="8"><path d="M1.5 1.5l3 2.2-3 2.2z" fill="#eee"/></svg>
<div class="t" style="left:1082.70px;top:147.68px;font-size:7px;color:#e4e4e4;-webkit-text-stroke:0.12px #e4e4e4;transform:scaleX(0.7980420916480329);transform-origin:0 0;">Recent</div>
<div class="t" style="left:1082.70px;top:162.70px;font-size:7px;color:#e4e4e4;-webkit-text-stroke:0.12px #e4e4e4;transform:scaleX(0.7989912735171845);transform-origin:0 0;">Favorites</div>
<div class="t" style="left:1082.70px;top:177.72px;font-size:7px;color:#e4e4e4;-webkit-text-stroke:0.12px #e4e4e4;transform:scaleX(0.7101222001952837);transform-origin:0 0;">Tags</div>
<div class="t" style="left:1082.70px;top:192.74px;font-size:7px;color:#e4e4e4;-webkit-text-stroke:0.12px #e4e4e4;transform:scaleX(0.689231227762979);transform-origin:0 0;">Symbols</div>
<div class="t" style="left:1082.70px;top:207.76px;font-size:7px;color:#e4e4e4;-webkit-text-stroke:0.12px #e4e4e4;transform:scaleX(0.7832396751061578);transform-origin:0 0;">Devices</div>
<div class="t" style="left:1082.70px;top:222.78px;font-size:7px;color:#e4e4e4;-webkit-text-stroke:0.12px #e4e4e4;transform:scaleX(0.8540275918713396);transform-origin:0 0;">Window macros / symbol macros</div>
<svg style="left:1067.5;top:143" width="16" height="95" fill="none" stroke="#e8e8e8" stroke-width="1"><circle cx="7" cy="8.5" r="4.7"/><path d="M6 5.8v3.5h3"/><path d="M7 18.2l1.6 3.5 3.8 0.3-2.9 2.4 1 3.7-3.5-2.1-3.5 2.1 1-3.7-2.9-2.4 3.8-0.3z" fill="#f4f4f4" stroke="none"/><path d="M4 42.5v-7a3 3 0 0 1 6 0v7l-3-1.8z"/><circle cx="7" cy="35.3" r="0.9"/><rect x="3.2" y="50.8" width="7.6" height="5"/><path d="M5 48.5v1.6M9 48.5v1.6M5 56.6v1.6M9 56.6v1.6" stroke="#c82020" stroke-width="0.9"/><path d="M1 64.2h2l1.5 6.3h6.3l1-4.5h-8" stroke-width="1.1"/><circle cx="5" cy="72.6" r="0.9" fill="#e8e8e8"/><circle cx="10" cy="72.6" r="0.9" fill="#e8e8e8"/><rect x="4" y="81" width="6" height="4.5" stroke="#ccc"/><path d="M5 79.5v1.3M9 79.5v1.3M5 85.7v1.3M9 85.7v1.3" stroke="#c82020" stroke-width="0.9"/><rect x="1.5" y="78.3" width="2.2" height="2.2" fill="#1ea0f0" stroke="none"/><rect x="10.3" y="78.3" width="2.2" height="2.2" fill="#1ea0f0" stroke="none"/><rect x="1.5" y="86.2" width="2.2" height="2.2" fill="#1ea0f0" stroke="none"/><rect x="10.3" y="86.2" width="2.2" height="2.2" fill="#1ea0f0" stroke="none"/></svg>
<div class="r" style="left:1062.00px;top:695.00px;width:218.00px;height:12.50px;background:#484848;"></div>
<div class="r" style="left:1062.00px;top:707.50px;width:218.00px;height:1.00px;background:#383838;"></div>
<div class="r" style="left:1100.00px;top:696.40px;width:22.00px;height:8.70px;background:#3d3d3d;"></div>
<svg style="left:1085;top:692" width="75" height="16" fill="none"><rect x="6.5" y="9.6" width="6.5" height="3" rx="1.3" stroke="#ccc" stroke-width="0.9" fill="#3a8ac8"/><path d="M11 6l-3.5 3.5" stroke="#2a9de8" stroke-width="1.6"/><path d="M19.2 11v-3.2a2.4 2.4 0 0 1 4.8 0v3.2" stroke="#eee" stroke-width="1.7"/><circle cx="18.3" cy="11.6" r="0.9" fill="#2a9de8"/><path d="M28.6 11.5v-3.7a2.4 2.4 0 0 1 4.8 0v3.7" stroke="#e6e6e6" stroke-width="1.7"/><path d="M34.5 7v0.8M34.5 9.5v0.8M34.5 12v0.8" stroke="#ddd" stroke-width="0.9"/><circle cx="42.5" cy="8.5" r="2.6" stroke="#2a8ad0" stroke-width="1.2" fill="#5a7a90"/><path d="M42.5 4.8v1M42.5 11.2v1M38.8 8.5h1M45.2 8.5h1" stroke="#999" stroke-width="0.8"/><path d="M55 5.5h6.5M55 8.5h6.5M55 11.5h6.5" stroke="#bbb" stroke-width="0.8" stroke-dasharray="0.9 0.6"/><path d="M55.3 5v7M58.3 5v7M61.3 5v7" stroke="#aaa" stroke-width="0.6" stroke-dasharray="0.9 0.6"/><path d="M65.8 7.2l1.2 1 1.2-1" stroke="#888" stroke-width="0.7"/></svg>
<div class="t" style="left:887.50px;width:600px;text-align:center;top:697.08px;font-size:7px;color:#e0e0e0;-webkit-text-stroke:0.12px #e0e0e0;transform:scaleX(0.8);transform-origin:50% 0;">Grid B: 1.00 mm</div>
<div class="t" style="left:932.00px;width:600px;text-align:center;top:697.08px;font-size:7px;color:#e0e0e0;-webkit-text-stroke:0.12px #e0e0e0;transform:scaleX(0.8);transform-origin:50% 0;">Graphic 1:1</div>
<svg style="left:1256;top:696" width="24" height="11" fill="none" stroke="#ccc" stroke-width="0.9"><circle cx="6" cy="4.5" r="3"/><path d="M8 7l2 2"/><rect x="3.5" y="6" width="3" height="3" stroke="#3a9ae0"/><circle cx="17" cy="4.5" r="3"/><path d="M19 7l2 2M14.5 8.5h5" stroke="#3a9ae0"/></svg>
</body></html>
